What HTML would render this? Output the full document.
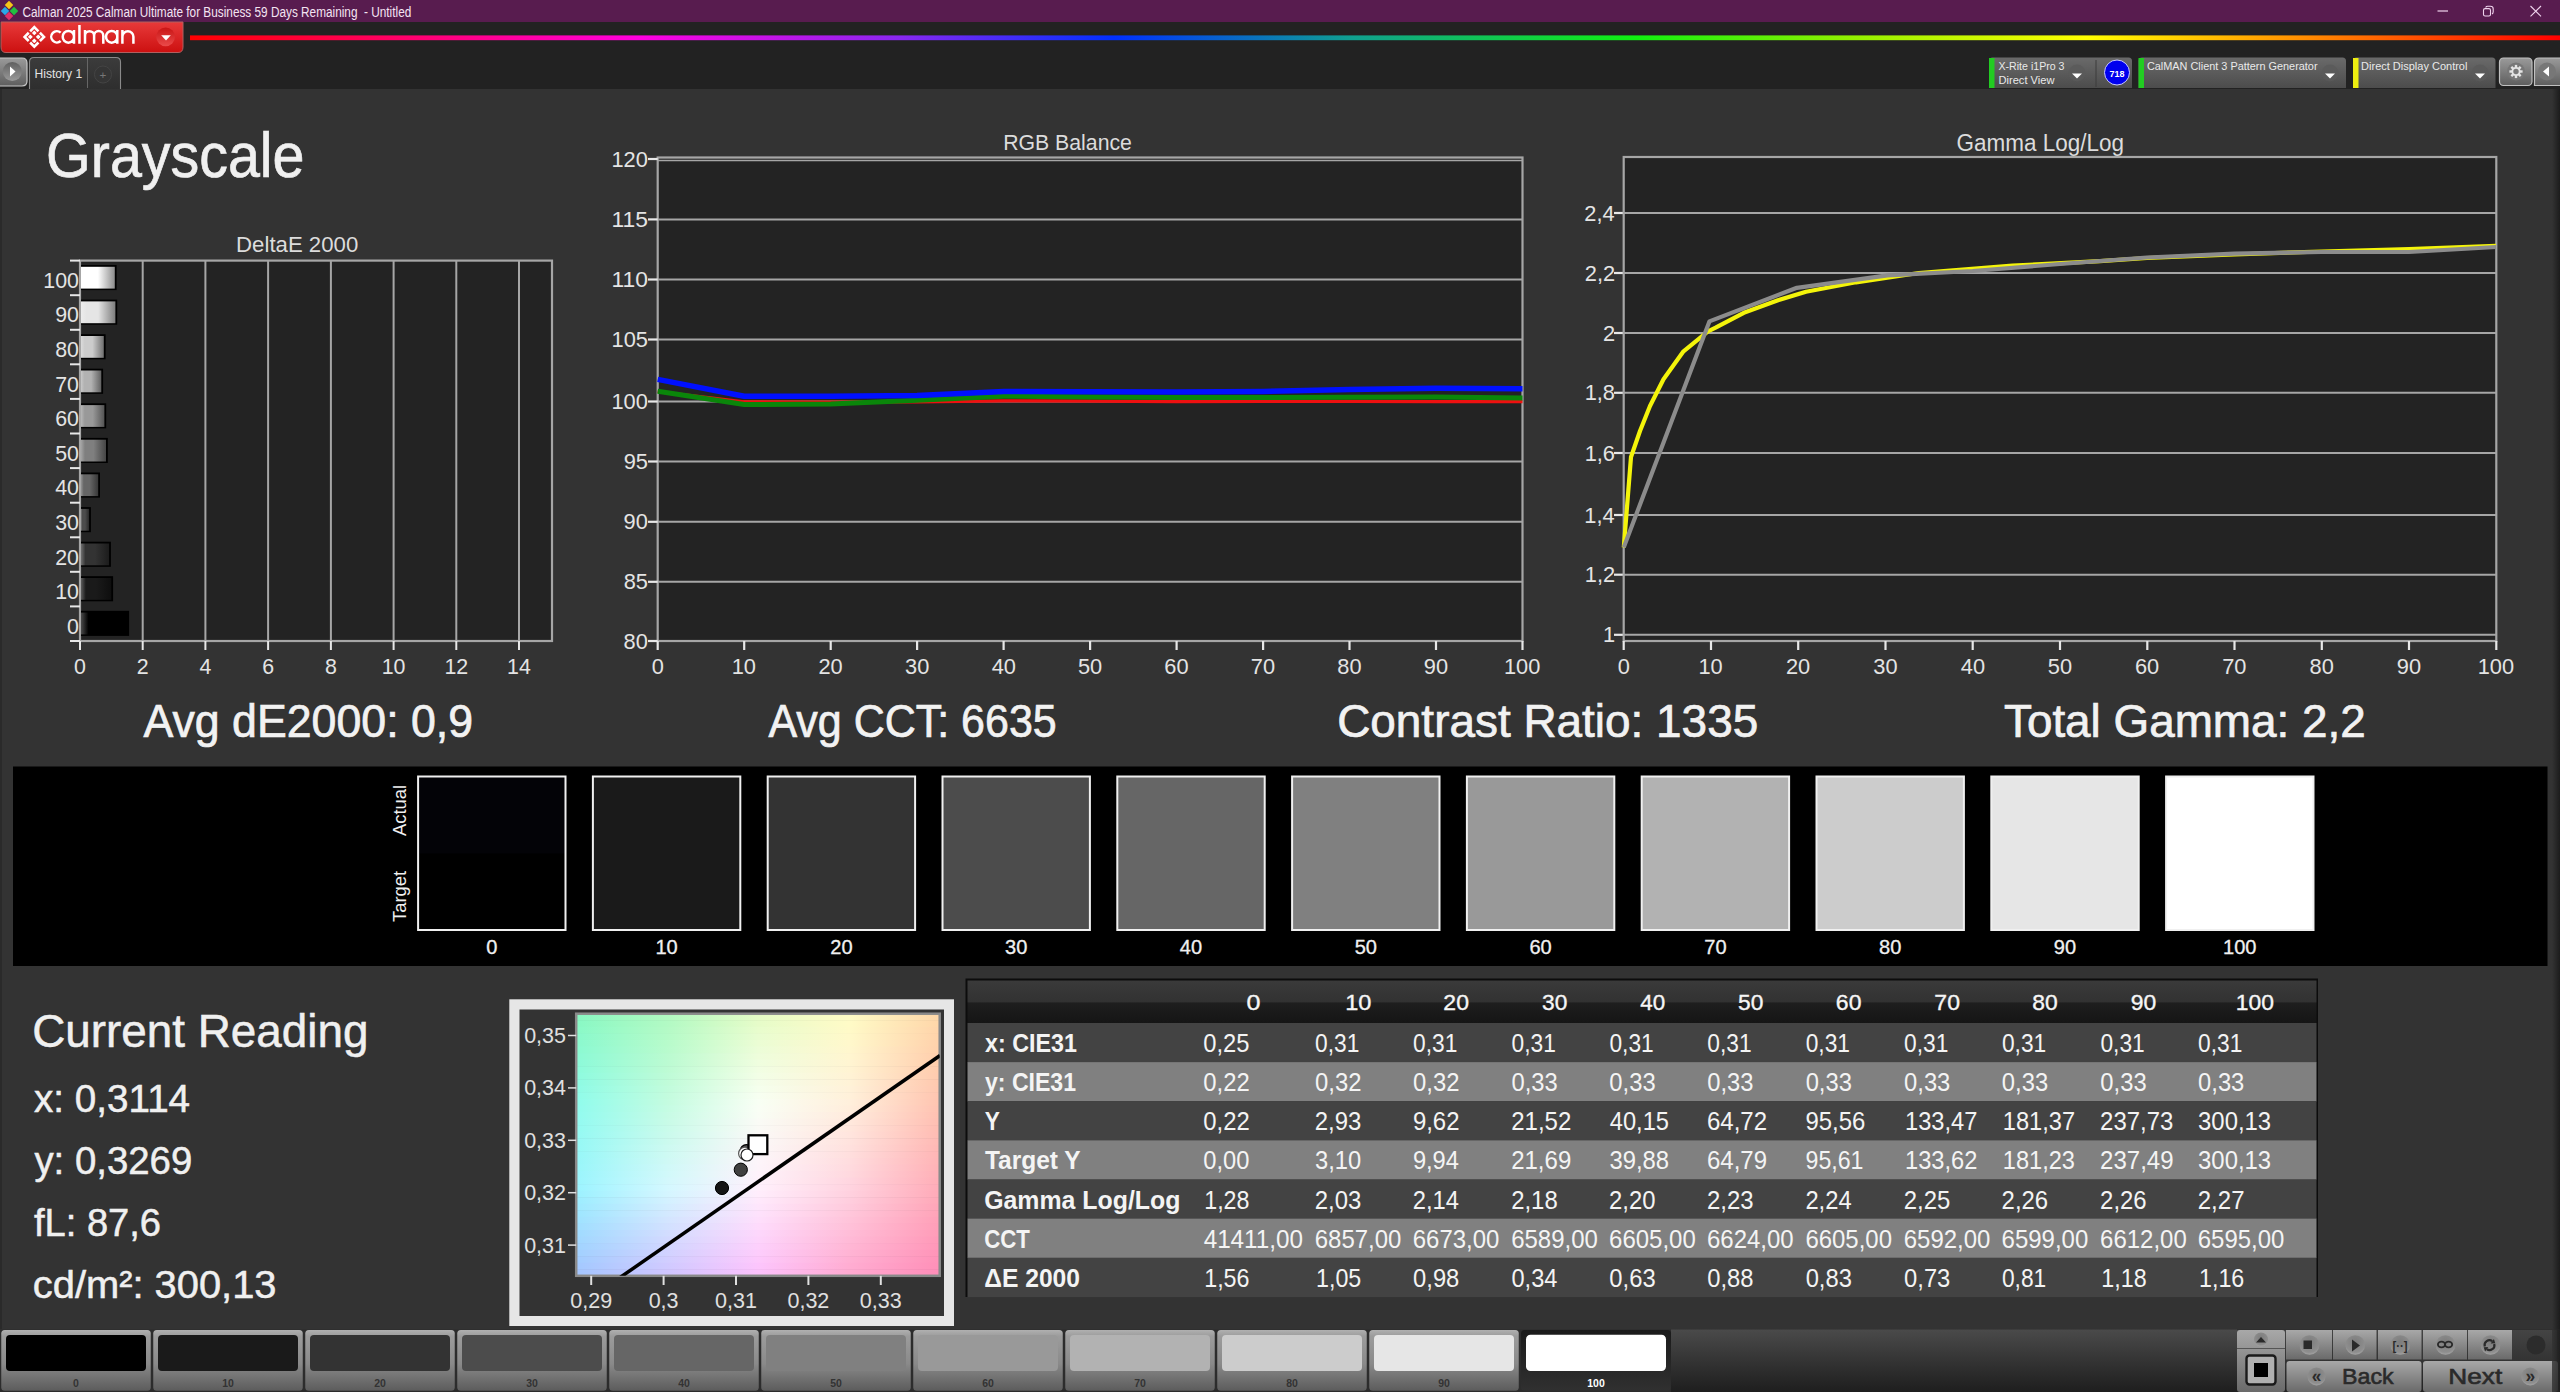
<!DOCTYPE html><html><head><meta charset="utf-8"><title>Calman Grayscale</title>
<style>html,body{margin:0;padding:0;background:#222;overflow:hidden;width:2560px;height:1392px}
svg{display:block;font-family:"Liberation Sans",sans-serif}</style></head><body>
<svg width="2560" height="1392" viewBox="0 0 2560 1392">
<defs>
<linearGradient id="rainbow" x1="0" x2="1" y1="0" y2="0">
<stop offset="0" stop-color="#ff0000"/><stop offset="0.19" stop-color="#ff00e0"/>
<stop offset="0.30" stop-color="#8828f0"/><stop offset="0.39" stop-color="#0030ff"/>
<stop offset="0.49" stop-color="#10a090"/><stop offset="0.61" stop-color="#10f010"/>
<stop offset="0.70" stop-color="#90f000"/><stop offset="0.80" stop-color="#ffff00"/>
<stop offset="0.89" stop-color="#ff9000"/><stop offset="1" stop-color="#ff0000"/>
</linearGradient>
<linearGradient id="redbtn" x1="0" x2="0" y1="0" y2="1">
<stop offset="0" stop-color="#e83a3a"/><stop offset="1" stop-color="#cc1010"/>
</linearGradient>
</defs>

<rect x="0.0" y="0.0" width="2560.0" height="1392.0" fill="#222222" />
<rect x="0.0" y="0.0" width="2560.0" height="22.0" fill="#581c4f" />
<rect x="0.0" y="89.0" width="2560.0" height="1303.0" fill="#333333" />
<defs><linearGradient id="redge" x1="0" x2="1"><stop offset="0" stop-color="#333"/><stop offset="1" stop-color="#1c1c1c"/></linearGradient></defs>
<rect x="2552.0" y="89.0" width="8.0" height="1303.0" fill="url(#redge)" />
<rect x="0.0" y="89.0" width="2.0" height="1240.0" fill="#2a2a2a" />
<text x="22.40" y="16.5" font-size="13.81" font-weight="normal" fill="#f4e4f2" textLength="388.86" lengthAdjust="spacingAndGlyphs" xml:space="preserve">Calman 2025 Calman Ultimate for Business 59 Days Remaining  - Untitled</text>
<rect x="6" y="2" width="6" height="6" fill="#f5c518" transform="rotate(45 9 5)"/>
<rect x="2" y="8" width="6" height="6" fill="#2aa8e8" transform="rotate(45 5 11)"/>
<rect x="11" y="8" width="6" height="6" fill="#22c040" transform="rotate(45 14 11)"/>
<rect x="6" y="13" width="6" height="6" fill="#e0306a" transform="rotate(45 9 16)"/>
<line x1="2437.5" y1="11.0" x2="2448.0" y2="11.0" stroke="#f0d4ee" stroke-width="1.2" />
<rect x="2483.5" y="8.6" width="7" height="7.4" rx="1.6" fill="none" stroke="#f0d4ee" stroke-width="1.1"/>
<path d="M2485.6 7.4 Q2486.2 6.3 2487.8 6.3 H2490.5 Q2493.2 6.3 2493.2 9 V11.8 Q2493.2 13.4 2492 14" fill="none" stroke="#f0d4ee" stroke-width="1.1"/>
<line x1="2530.5" y1="6.0" x2="2541.0" y2="16.3" stroke="#f0d4ee" stroke-width="1.1" />
<line x1="2541.0" y1="6.0" x2="2530.5" y2="16.3" stroke="#f0d4ee" stroke-width="1.1" />
<path d="M1 22 H183 V47 Q183 52.5 178 52.5 H6 Q1 52.5 1 47 Z" fill="url(#redbtn)" stroke="#b06060" stroke-width="1"/>
<g transform="translate(34.3 36.9) rotate(45)"><path d="M-6.86 -1.0 V-6.86 H-1.0 M1.0 -6.86 H6.86 V-1.0 M6.86 1.0 V6.86 H1.0 M-1.0 6.86 H-6.86 V1.0" fill="none" stroke="#fff" stroke-width="2.6" stroke-linejoin="miter" stroke-linecap="butt"/><rect x="-4.5" y="-4.5" width="3.4" height="3.4" rx="0.4" fill="#fff"/><rect x="1.1" y="-4.5" width="3.4" height="3.4" rx="0.4" fill="#fff"/><rect x="-4.5" y="1.1" width="3.4" height="3.4" rx="0.4" fill="#fff"/><rect x="1.1" y="1.1" width="3.4" height="3.4" rx="0.4" fill="#fff"/></g>
<path d="M60.66 32.60 A5.64 5.64 0 1 0 60.66 40.97 M74.00 36.78 A5.64 5.64 0 1 0 62.73 36.78 A5.64 5.64 0 1 0 74.00 36.78 M74.00 29.90 V43.67 M79.45 25.1 V43.67 M85 29.90 V43.67 M85 35.70 A4.55 4.55 0 0 1 94.1 35.70 V43.67 M94.1 35.70 A4.55 4.55 0 0 1 103.3 35.70 V43.67 M117.30 36.78 A5.64 5.64 0 1 0 106.03 36.78 A5.64 5.64 0 1 0 117.30 36.78 M117.30 29.90 V43.67 M122.4 29.90 V43.67 M122.4 36.65 A5.50 5.50 0 0 1 133.4 36.65 V43.67" fill="none" stroke="#ffffff" stroke-width="2.5"/>
<defs><linearGradient id="ddk" x1="0" x2="0" y1="0" y2="1"><stop offset="0" stop-color="#c81414"/><stop offset="1" stop-color="#ea4a4a"/></linearGradient></defs>
<circle cx="165.6" cy="36.8" r="9.4" fill="url(#ddk)"/>
<path d="M161.2 35.2 L170.8 35.2 L166 40.6 Z" fill="#fff"/>
<rect x="190.0" y="35.4" width="2370.0" height="4.8" fill="url(#rainbow)" />
<defs><linearGradient id="btngray" x1="0" x2="0" y1="0" y2="1"><stop offset="0" stop-color="#9a9a9a"/><stop offset="1" stop-color="#5e5e5e"/></linearGradient><linearGradient id="tabg" x1="0" x2="0" y1="0" y2="1"><stop offset="0" stop-color="#3c3c3c"/><stop offset="1" stop-color="#2e2e2e"/></linearGradient><linearGradient id="knob" x1="0" x2="0" y1="0" y2="1"><stop offset="0" stop-color="#606060"/><stop offset="1" stop-color="#9a9a9a"/></linearGradient></defs>
<path d="M-2 58 H22 Q27 58 27 63 V81 Q27 86 22 86 H-2 Z" fill="url(#btngray)" stroke="#c8c8c8" stroke-width="1.2"/>
<circle cx="12.3" cy="71.5" r="9.5" fill="url(#knob)"/>
<path d="M10 66.5 L15.5 71.5 L10 76.5 Z" fill="#fff"/>
<path d="M29.5 89 V62 Q29.5 57.5 34 57.5 H116 Q120.5 57.5 120.5 62 V89" fill="url(#tabg)" stroke="#8a8a8a" stroke-width="1.1"/>
<line x1="87.5" y1="58.0" x2="87.5" y2="88.0" stroke="#666" stroke-width="1" />
<text x="34.51" y="77.8" font-size="12.79" font-weight="normal" fill="#e4e4e4" textLength="47.68" lengthAdjust="spacingAndGlyphs" >History 1</text>
<circle cx="103" cy="74.5" r="8.5" fill="#353535" stroke="#444" stroke-width="1"/>
<text x="103.0" y="79.0" font-size="11.63" text-anchor="middle" font-weight="normal" fill="#777" >+</text>
<defs><linearGradient id="tbg" x1="0" x2="0" y1="0" y2="1"><stop offset="0" stop-color="#6a6a6a"/><stop offset="1" stop-color="#4c4c4c"/></linearGradient></defs>
<path d="M1989 88 V61 Q1989 57.5 1992.5 57.5 H2128.5 Q2132 57.5 2132 61 V88 Z" fill="url(#tbg)"/>
<rect x="1989.0" y="58.0" width="5.5" height="30.0" fill="#22cc22" />
<text x="1998.5" y="70.0" font-size="11.05" text-anchor="start" font-weight="normal" fill="#eaeaea" textLength="66.0" lengthAdjust="spacingAndGlyphs" >X-Rite i1Pro 3</text>
<text x="1998.5" y="84.0" font-size="11.05" text-anchor="start" font-weight="normal" fill="#eaeaea" textLength="56.0" lengthAdjust="spacingAndGlyphs" >Direct View</text>
<circle cx="2077" cy="73" r="8.5" fill="#5a5a5a" opacity="0.8"/>
<path d="M2072 73.5 L2082 73.5 L2077 78.5 Z" fill="#fff"/>
<line x1="2096.0" y1="60.0" x2="2096.0" y2="87.0" stroke="#3c3c3c" stroke-width="1" />
<circle cx="2117" cy="72.5" r="12.5" fill="#0000ee" stroke="#c8c8ff" stroke-width="1"/>
<text x="2117.0" y="76.5" font-size="9.88" text-anchor="middle" font-weight="bold" fill="#fff" textLength="15.0" lengthAdjust="spacingAndGlyphs" >718</text>
<path d="M2138.5 88 V61 Q2138.5 57.5 2142.0 57.5 H2342.5 Q2346 57.5 2346 61 V88 Z" fill="url(#tbg)"/>
<rect x="2138.5" y="58.0" width="5.5" height="30.0" fill="#22cc22" />
<text x="2146.95" y="70.0" font-size="11.05" font-weight="normal" fill="#eaeaea" textLength="170.63" lengthAdjust="spacingAndGlyphs" >CalMAN Client 3 Pattern Generator</text>
<circle cx="2330" cy="73" r="8.5" fill="#5a5a5a" opacity="0.8"/>
<path d="M2325 73.5 L2335 73.5 L2330 78.5 Z" fill="#fff"/>
<path d="M2353 88 V61 Q2353 57.5 2356.5 57.5 H2492.0 Q2495.5 57.5 2495.5 61 V88 Z" fill="url(#tbg)"/>
<rect x="2353.0" y="58.0" width="5.5" height="30.0" fill="#eeee10" />
<text x="2361.10" y="70.0" font-size="11.05" font-weight="normal" fill="#eaeaea" textLength="106.34" lengthAdjust="spacingAndGlyphs" >Direct Display Control</text>
<circle cx="2480" cy="73" r="8.5" fill="#5a5a5a" opacity="0.8"/>
<path d="M2475 73.5 L2485 73.5 L2480 78.5 Z" fill="#fff"/>
<rect x="2499.5" y="58" width="32.5" height="27.5" rx="4" fill="url(#btngray)" stroke="#c0c0c0" stroke-width="1.2"/>
<circle cx="2516" cy="71.5" r="9" fill="#777"/>
<g transform="translate(2516 71.5)" fill="#e4e4e4"><rect x="-1.2" y="-6.6" width="2.4" height="3.2" transform="rotate(0)"/><rect x="-1.2" y="-6.6" width="2.4" height="3.2" transform="rotate(45)"/><rect x="-1.2" y="-6.6" width="2.4" height="3.2" transform="rotate(90)"/><rect x="-1.2" y="-6.6" width="2.4" height="3.2" transform="rotate(135)"/><rect x="-1.2" y="-6.6" width="2.4" height="3.2" transform="rotate(180)"/><rect x="-1.2" y="-6.6" width="2.4" height="3.2" transform="rotate(225)"/><rect x="-1.2" y="-6.6" width="2.4" height="3.2" transform="rotate(270)"/><rect x="-1.2" y="-6.6" width="2.4" height="3.2" transform="rotate(315)"/><circle r="4.6"/><circle r="2.7" fill="#7a7a7a"/></g>
<path d="M2534.5 85.5 V62 Q2534.5 58 2539 58 H2562 V85.5 Z" fill="url(#btngray)" stroke="#c0c0c0" stroke-width="1.2"/>
<circle cx="2547" cy="71.5" r="9" fill="#777"/>
<path d="M2549 66.5 L2543 71.5 L2549 76.5 Z" fill="#fff"/>
<text x="46.11" y="177.0" font-size="62.50" font-weight="normal" fill="#f0f0f0" textLength="258.44" lengthAdjust="spacingAndGlyphs" stroke="#f0f0f0" stroke-width="0.7">Grayscale</text>
<text x="236.08" y="252.2" font-size="21.22" font-weight="normal" fill="#dcdcdc" textLength="122.19" lengthAdjust="spacingAndGlyphs" >DeltaE 2000</text>
<rect x="80.0" y="260.6" width="472.0" height="380.4" fill="#232323" />
<line x1="142.7" y1="260.6" x2="142.7" y2="641.0" stroke="#a6a6a6" stroke-width="2" />
<line x1="205.4" y1="260.6" x2="205.4" y2="641.0" stroke="#a6a6a6" stroke-width="2" />
<line x1="268.1" y1="260.6" x2="268.1" y2="641.0" stroke="#a6a6a6" stroke-width="2" />
<line x1="330.9" y1="260.6" x2="330.9" y2="641.0" stroke="#a6a6a6" stroke-width="2" />
<line x1="393.6" y1="260.6" x2="393.6" y2="641.0" stroke="#a6a6a6" stroke-width="2" />
<line x1="456.3" y1="260.6" x2="456.3" y2="641.0" stroke="#a6a6a6" stroke-width="2" />
<line x1="519.0" y1="260.6" x2="519.0" y2="641.0" stroke="#a6a6a6" stroke-width="2" />
<rect x="80" y="260.6" width="472" height="380.4" fill="none" stroke="#a6a6a6" stroke-width="2.2"/>
<line x1="80.0" y1="641.0" x2="80.0" y2="650.0" stroke="#e8e8e8" stroke-width="2" />
<text x="80.0" y="673.6" font-size="21.37" text-anchor="middle" font-weight="normal" fill="#e4e4e4" >0</text>
<line x1="142.7" y1="641.0" x2="142.7" y2="650.0" stroke="#e8e8e8" stroke-width="2" />
<text x="142.7" y="673.6" font-size="21.37" text-anchor="middle" font-weight="normal" fill="#e4e4e4" >2</text>
<line x1="205.4" y1="641.0" x2="205.4" y2="650.0" stroke="#e8e8e8" stroke-width="2" />
<text x="205.4" y="673.6" font-size="21.37" text-anchor="middle" font-weight="normal" fill="#e4e4e4" >4</text>
<line x1="268.1" y1="641.0" x2="268.1" y2="650.0" stroke="#e8e8e8" stroke-width="2" />
<text x="268.1" y="673.6" font-size="21.37" text-anchor="middle" font-weight="normal" fill="#e4e4e4" >6</text>
<line x1="330.9" y1="641.0" x2="330.9" y2="650.0" stroke="#e8e8e8" stroke-width="2" />
<text x="330.9" y="673.6" font-size="21.37" text-anchor="middle" font-weight="normal" fill="#e4e4e4" >8</text>
<line x1="393.6" y1="641.0" x2="393.6" y2="650.0" stroke="#e8e8e8" stroke-width="2" />
<text x="393.6" y="673.6" font-size="21.37" text-anchor="middle" font-weight="normal" fill="#e4e4e4" >10</text>
<line x1="456.3" y1="641.0" x2="456.3" y2="650.0" stroke="#e8e8e8" stroke-width="2" />
<text x="456.3" y="673.6" font-size="21.37" text-anchor="middle" font-weight="normal" fill="#e4e4e4" >12</text>
<line x1="519.0" y1="641.0" x2="519.0" y2="650.0" stroke="#e8e8e8" stroke-width="2" />
<text x="519.0" y="673.6" font-size="21.37" text-anchor="middle" font-weight="normal" fill="#e4e4e4" >14</text>
<line x1="70.0" y1="260.6" x2="80.0" y2="260.6" stroke="#e8e8e8" stroke-width="2" />
<line x1="70.0" y1="295.2" x2="80.0" y2="295.2" stroke="#e8e8e8" stroke-width="2" />
<line x1="70.0" y1="329.8" x2="80.0" y2="329.8" stroke="#e8e8e8" stroke-width="2" />
<line x1="70.0" y1="364.3" x2="80.0" y2="364.3" stroke="#e8e8e8" stroke-width="2" />
<line x1="70.0" y1="398.9" x2="80.0" y2="398.9" stroke="#e8e8e8" stroke-width="2" />
<line x1="70.0" y1="433.5" x2="80.0" y2="433.5" stroke="#e8e8e8" stroke-width="2" />
<line x1="70.0" y1="468.1" x2="80.0" y2="468.1" stroke="#e8e8e8" stroke-width="2" />
<line x1="70.0" y1="502.7" x2="80.0" y2="502.7" stroke="#e8e8e8" stroke-width="2" />
<line x1="70.0" y1="537.3" x2="80.0" y2="537.3" stroke="#e8e8e8" stroke-width="2" />
<line x1="70.0" y1="571.8" x2="80.0" y2="571.8" stroke="#e8e8e8" stroke-width="2" />
<line x1="70.0" y1="606.4" x2="80.0" y2="606.4" stroke="#e8e8e8" stroke-width="2" />
<line x1="70.0" y1="641.0" x2="80.0" y2="641.0" stroke="#e8e8e8" stroke-width="2" />
<rect x="81.0" y="265.0" width="35.6" height="25.1" fill="#000" />
<rect x="81.0" y="266.8" width="33.8" height="21.8" fill="url(#bar100)" />
<text x="43.29" y="287.8" font-size="21.37" font-weight="normal" fill="#e4e4e4" textLength="35.65" lengthAdjust="spacingAndGlyphs" >100</text>
<rect x="81.0" y="299.6" width="36.2" height="25.1" fill="#000" />
<rect x="81.0" y="301.4" width="34.4" height="21.8" fill="url(#bar90)" />
<text x="55.17" y="322.4" font-size="21.37" font-weight="normal" fill="#e4e4e4" textLength="23.77" lengthAdjust="spacingAndGlyphs" >90</text>
<rect x="81.0" y="334.2" width="24.6" height="25.1" fill="#000" />
<rect x="81.0" y="336.0" width="22.8" height="21.8" fill="url(#bar80)" />
<text x="55.17" y="357.0" font-size="21.37" font-weight="normal" fill="#e4e4e4" textLength="23.77" lengthAdjust="spacingAndGlyphs" >80</text>
<rect x="81.0" y="368.7" width="22.1" height="25.1" fill="#000" />
<rect x="81.0" y="370.5" width="20.3" height="21.8" fill="url(#bar70)" />
<text x="55.17" y="391.5" font-size="21.37" font-weight="normal" fill="#e4e4e4" textLength="23.77" lengthAdjust="spacingAndGlyphs" >70</text>
<rect x="81.0" y="403.3" width="25.2" height="25.1" fill="#000" />
<rect x="81.0" y="405.1" width="23.4" height="21.8" fill="url(#bar60)" />
<text x="55.17" y="426.1" font-size="21.37" font-weight="normal" fill="#e4e4e4" textLength="23.77" lengthAdjust="spacingAndGlyphs" >60</text>
<rect x="81.0" y="437.9" width="26.8" height="25.1" fill="#000" />
<rect x="81.0" y="439.7" width="25.0" height="21.8" fill="url(#bar50)" />
<text x="55.17" y="460.7" font-size="21.37" font-weight="normal" fill="#e4e4e4" textLength="23.77" lengthAdjust="spacingAndGlyphs" >50</text>
<rect x="81.0" y="472.5" width="19.0" height="25.1" fill="#000" />
<rect x="81.0" y="474.3" width="17.2" height="21.8" fill="url(#bar40)" />
<text x="55.17" y="495.3" font-size="21.37" font-weight="normal" fill="#e4e4e4" textLength="23.77" lengthAdjust="spacingAndGlyphs" >40</text>
<rect x="81.0" y="507.1" width="9.9" height="25.1" fill="#000" />
<rect x="81.0" y="508.9" width="8.1" height="21.8" fill="url(#bar30)" />
<text x="55.17" y="529.9" font-size="21.37" font-weight="normal" fill="#e4e4e4" textLength="23.77" lengthAdjust="spacingAndGlyphs" >30</text>
<rect x="81.0" y="541.7" width="29.9" height="25.1" fill="#000" />
<rect x="81.0" y="543.5" width="28.1" height="21.8" fill="url(#bar20)" />
<text x="55.17" y="564.5" font-size="21.37" font-weight="normal" fill="#e4e4e4" textLength="23.77" lengthAdjust="spacingAndGlyphs" >20</text>
<rect x="81.0" y="576.2" width="32.1" height="25.1" fill="#000" />
<rect x="81.0" y="578.0" width="30.3" height="21.8" fill="url(#bar10)" />
<text x="55.17" y="599.0" font-size="21.37" font-weight="normal" fill="#e4e4e4" textLength="23.77" lengthAdjust="spacingAndGlyphs" >10</text>
<rect x="81.0" y="610.8" width="48.1" height="25.1" fill="#000" />
<rect x="81.0" y="612.6" width="46.3" height="21.8" fill="url(#bar0)" />
<text x="67.05" y="633.6" font-size="21.37" font-weight="normal" fill="#e4e4e4" textLength="11.88" lengthAdjust="spacingAndGlyphs" >0</text>
<defs><linearGradient id="bar100" x1="0" x2="1" y1="0" y2="0"><stop offset="0" stop-color="#ffffff"/><stop offset="0.16" stop-color="#ffffff"/><stop offset="0.5" stop-color="#ffffff"/><stop offset="1" stop-color="#8c8c8c"/></linearGradient><linearGradient id="bar90" x1="0" x2="1" y1="0" y2="0"><stop offset="0" stop-color="#ececec"/><stop offset="0.16" stop-color="#e5e5e5"/><stop offset="0.5" stop-color="#e5e5e5"/><stop offset="1" stop-color="#7d7d7d"/></linearGradient><linearGradient id="bar80" x1="0" x2="1" y1="0" y2="0"><stop offset="0" stop-color="#dbdbdb"/><stop offset="0.16" stop-color="#cccccc"/><stop offset="0.5" stop-color="#cccccc"/><stop offset="1" stop-color="#707070"/></linearGradient><linearGradient id="bar70" x1="0" x2="1" y1="0" y2="0"><stop offset="0" stop-color="#c8c8c8"/><stop offset="0.16" stop-color="#b2b2b2"/><stop offset="0.5" stop-color="#b2b2b2"/><stop offset="1" stop-color="#616161"/></linearGradient><linearGradient id="bar60" x1="0" x2="1" y1="0" y2="0"><stop offset="0" stop-color="#b7b7b7"/><stop offset="0.16" stop-color="#999999"/><stop offset="0.5" stop-color="#999999"/><stop offset="1" stop-color="#545454"/></linearGradient><linearGradient id="bar50" x1="0" x2="1" y1="0" y2="0"><stop offset="0" stop-color="#a4a4a4"/><stop offset="0.16" stop-color="#7f7f7f"/><stop offset="0.5" stop-color="#7f7f7f"/><stop offset="1" stop-color="#454545"/></linearGradient><linearGradient id="bar40" x1="0" x2="1" y1="0" y2="0"><stop offset="0" stop-color="#939393"/><stop offset="0.16" stop-color="#666666"/><stop offset="0.5" stop-color="#666666"/><stop offset="1" stop-color="#383838"/></linearGradient><linearGradient id="bar30" x1="0" x2="1" y1="0" y2="0"><stop offset="0" stop-color="#808080"/><stop offset="0.16" stop-color="#4c4c4c"/><stop offset="0.5" stop-color="#4c4c4c"/><stop offset="1" stop-color="#292929"/></linearGradient><linearGradient id="bar20" x1="0" x2="1" y1="0" y2="0"><stop offset="0" stop-color="#6f6f6f"/><stop offset="0.16" stop-color="#333333"/><stop offset="0.5" stop-color="#333333"/><stop offset="1" stop-color="#1c1c1c"/></linearGradient><linearGradient id="bar10" x1="0" x2="1" y1="0" y2="0"><stop offset="0" stop-color="#5d5d5d"/><stop offset="0.16" stop-color="#1a1a1a"/><stop offset="0.5" stop-color="#1a1a1a"/><stop offset="1" stop-color="#0e0e0e"/></linearGradient><linearGradient id="bar0" x1="0" x2="1" y1="0" y2="0"><stop offset="0" stop-color="#4b4b4b"/><stop offset="0.16" stop-color="#000000"/><stop offset="0.5" stop-color="#000000"/><stop offset="1" stop-color="#000000"/></linearGradient></defs>
<text x="1003.16" y="149.5" font-size="22.53" font-weight="normal" fill="#dcdcdc" textLength="128.79" lengthAdjust="spacingAndGlyphs" >RGB Balance</text>
<rect x="657.7" y="159.0" width="864.8" height="482.0" fill="#232323" />
<line x1="657.7" y1="581.8" x2="1522.5" y2="581.8" stroke="#a6a6a6" stroke-width="2" />
<line x1="657.7" y1="521.8" x2="1522.5" y2="521.8" stroke="#a6a6a6" stroke-width="2" />
<line x1="657.7" y1="461.5" x2="1522.5" y2="461.5" stroke="#a6a6a6" stroke-width="2" />
<line x1="657.7" y1="401.5" x2="1522.5" y2="401.5" stroke="#a6a6a6" stroke-width="2" />
<line x1="657.7" y1="339.5" x2="1522.5" y2="339.5" stroke="#a6a6a6" stroke-width="2" />
<line x1="657.7" y1="279.5" x2="1522.5" y2="279.5" stroke="#a6a6a6" stroke-width="2" />
<line x1="657.7" y1="219.4" x2="1522.5" y2="219.4" stroke="#a6a6a6" stroke-width="2" />
<rect x="657.7" y="157.5" width="864.8" height="483.5" fill="none" stroke="#a6a6a6" stroke-width="2.2"/>
<line x1="657.7" y1="160.5" x2="1522.5" y2="160.5" stroke="#a6a6a6" stroke-width="1.6" />
<line x1="648.0" y1="641.0" x2="657.7" y2="641.0" stroke="#e8e8e8" stroke-width="2.2" />
<text x="623.60" y="648.6" font-size="21.80" font-weight="normal" fill="#e4e4e4" textLength="24.25" lengthAdjust="spacingAndGlyphs" >80</text>
<line x1="648.0" y1="581.8" x2="657.7" y2="581.8" stroke="#e8e8e8" stroke-width="2.2" />
<text x="623.66" y="589.4" font-size="21.80" font-weight="normal" fill="#e4e4e4" textLength="24.25" lengthAdjust="spacingAndGlyphs" >85</text>
<line x1="648.0" y1="521.8" x2="657.7" y2="521.8" stroke="#e8e8e8" stroke-width="2.2" />
<text x="623.60" y="529.4" font-size="21.80" font-weight="normal" fill="#e4e4e4" textLength="24.25" lengthAdjust="spacingAndGlyphs" >90</text>
<line x1="648.0" y1="461.5" x2="657.7" y2="461.5" stroke="#e8e8e8" stroke-width="2.2" />
<text x="623.66" y="469.1" font-size="21.80" font-weight="normal" fill="#e4e4e4" textLength="24.25" lengthAdjust="spacingAndGlyphs" >95</text>
<line x1="648.0" y1="401.5" x2="657.7" y2="401.5" stroke="#e8e8e8" stroke-width="2.2" />
<text x="611.48" y="409.1" font-size="21.80" font-weight="normal" fill="#e4e4e4" textLength="36.38" lengthAdjust="spacingAndGlyphs" >100</text>
<line x1="648.0" y1="339.5" x2="657.7" y2="339.5" stroke="#e8e8e8" stroke-width="2.2" />
<text x="611.54" y="347.1" font-size="21.80" font-weight="normal" fill="#e4e4e4" textLength="36.38" lengthAdjust="spacingAndGlyphs" >105</text>
<line x1="648.0" y1="279.5" x2="657.7" y2="279.5" stroke="#e8e8e8" stroke-width="2.2" />
<text x="611.48" y="287.1" font-size="21.80" font-weight="normal" fill="#e4e4e4" textLength="36.38" lengthAdjust="spacingAndGlyphs" >110</text>
<line x1="648.0" y1="219.4" x2="657.7" y2="219.4" stroke="#e8e8e8" stroke-width="2.2" />
<text x="611.54" y="227.0" font-size="21.80" font-weight="normal" fill="#e4e4e4" textLength="36.38" lengthAdjust="spacingAndGlyphs" >115</text>
<line x1="648.0" y1="159.0" x2="657.7" y2="159.0" stroke="#e8e8e8" stroke-width="2.2" />
<text x="611.48" y="166.6" font-size="21.80" font-weight="normal" fill="#e4e4e4" textLength="36.38" lengthAdjust="spacingAndGlyphs" >120</text>
<line x1="657.7" y1="641.0" x2="657.7" y2="650.0" stroke="#e8e8e8" stroke-width="2.2" />
<text x="651.64" y="674.0" font-size="21.80" font-weight="normal" fill="#e4e4e4" textLength="12.13" lengthAdjust="spacingAndGlyphs" >0</text>
<line x1="744.2" y1="641.0" x2="744.2" y2="650.0" stroke="#e8e8e8" stroke-width="2.2" />
<text x="731.65" y="674.0" font-size="21.80" font-weight="normal" fill="#e4e4e4" textLength="24.25" lengthAdjust="spacingAndGlyphs" >10</text>
<line x1="830.7" y1="641.0" x2="830.7" y2="650.0" stroke="#e8e8e8" stroke-width="2.2" />
<text x="818.41" y="674.0" font-size="21.80" font-weight="normal" fill="#e4e4e4" textLength="24.25" lengthAdjust="spacingAndGlyphs" >20</text>
<line x1="917.1" y1="641.0" x2="917.1" y2="650.0" stroke="#e8e8e8" stroke-width="2.2" />
<text x="905.03" y="674.0" font-size="21.80" font-weight="normal" fill="#e4e4e4" textLength="24.25" lengthAdjust="spacingAndGlyphs" >30</text>
<line x1="1003.6" y1="641.0" x2="1003.6" y2="650.0" stroke="#e8e8e8" stroke-width="2.2" />
<text x="991.67" y="674.0" font-size="21.80" font-weight="normal" fill="#e4e4e4" textLength="24.25" lengthAdjust="spacingAndGlyphs" >40</text>
<line x1="1090.1" y1="641.0" x2="1090.1" y2="650.0" stroke="#e8e8e8" stroke-width="2.2" />
<text x="1077.96" y="674.0" font-size="21.80" font-weight="normal" fill="#e4e4e4" textLength="24.25" lengthAdjust="spacingAndGlyphs" >50</text>
<line x1="1176.6" y1="641.0" x2="1176.6" y2="650.0" stroke="#e8e8e8" stroke-width="2.2" />
<text x="1164.33" y="674.0" font-size="21.80" font-weight="normal" fill="#e4e4e4" textLength="24.25" lengthAdjust="spacingAndGlyphs" >60</text>
<line x1="1263.1" y1="641.0" x2="1263.1" y2="650.0" stroke="#e8e8e8" stroke-width="2.2" />
<text x="1250.80" y="674.0" font-size="21.80" font-weight="normal" fill="#e4e4e4" textLength="24.25" lengthAdjust="spacingAndGlyphs" >70</text>
<line x1="1349.5" y1="641.0" x2="1349.5" y2="650.0" stroke="#e8e8e8" stroke-width="2.2" />
<text x="1337.37" y="674.0" font-size="21.80" font-weight="normal" fill="#e4e4e4" textLength="24.25" lengthAdjust="spacingAndGlyphs" >80</text>
<line x1="1436.0" y1="641.0" x2="1436.0" y2="650.0" stroke="#e8e8e8" stroke-width="2.2" />
<text x="1423.81" y="674.0" font-size="21.80" font-weight="normal" fill="#e4e4e4" textLength="24.25" lengthAdjust="spacingAndGlyphs" >90</text>
<line x1="1522.5" y1="641.0" x2="1522.5" y2="650.0" stroke="#e8e8e8" stroke-width="2.2" />
<text x="1503.91" y="674.0" font-size="21.80" font-weight="normal" fill="#e4e4e4" textLength="36.38" lengthAdjust="spacingAndGlyphs" >100</text>
<polyline points="657.7,391.5 744.2,401.8 830.7,402.2 917.1,401.8 1003.6,400.8 1090.1,401.2 1176.6,401.6 1263.1,401.4 1349.5,401.4 1436.0,401.6 1522.5,401.6" fill="none" stroke="#ee1010" stroke-width="3.2" stroke-linejoin="round"/>
<polyline points="657.7,391.2 744.2,404.5 830.7,404.0 917.1,400.3 1003.6,396.2 1090.1,397.0 1176.6,397.6 1263.1,397.5 1349.5,397.3 1436.0,397.0 1522.5,398.0" fill="none" stroke="#0a860a" stroke-width="5" stroke-linejoin="round"/>
<polyline points="657.7,379.4 744.2,396.3 830.7,396.3 917.1,395.5 1003.6,391.4 1090.1,391.8 1176.6,392.1 1263.1,391.5 1349.5,389.4 1436.0,388.3 1522.5,388.7" fill="none" stroke="#0010ff" stroke-width="5.5" stroke-linejoin="round"/>
<text x="1956.57" y="150.5" font-size="23.98" font-weight="normal" fill="#dcdcdc" textLength="167.38" lengthAdjust="spacingAndGlyphs" >Gamma Log/Log</text>
<rect x="1623.7" y="157.0" width="872.6" height="484.0" fill="#232323" />
<line x1="1623.7" y1="213.0" x2="2496.3" y2="213.0" stroke="#a6a6a6" stroke-width="2" />
<line x1="1614.0" y1="213.0" x2="1623.7" y2="213.0" stroke="#e8e8e8" stroke-width="2.2" />
<text x="1584.33" y="220.6" font-size="21.80" font-weight="normal" fill="#e4e4e4" textLength="30.31" lengthAdjust="spacingAndGlyphs" >2,4</text>
<line x1="1623.7" y1="273.0" x2="2496.3" y2="273.0" stroke="#a6a6a6" stroke-width="2" />
<line x1="1614.0" y1="273.0" x2="1623.7" y2="273.0" stroke="#e8e8e8" stroke-width="2.2" />
<text x="1584.79" y="280.6" font-size="21.80" font-weight="normal" fill="#e4e4e4" textLength="30.31" lengthAdjust="spacingAndGlyphs" >2,2</text>
<line x1="1623.7" y1="333.0" x2="2496.3" y2="333.0" stroke="#a6a6a6" stroke-width="2" />
<line x1="1614.0" y1="333.0" x2="1623.7" y2="333.0" stroke="#e8e8e8" stroke-width="2.2" />
<text x="1602.97" y="340.6" font-size="21.80" font-weight="normal" fill="#e4e4e4" textLength="12.13" lengthAdjust="spacingAndGlyphs" >2</text>
<line x1="1623.7" y1="392.8" x2="2496.3" y2="392.8" stroke="#a6a6a6" stroke-width="2" />
<line x1="1614.0" y1="392.8" x2="1623.7" y2="392.8" stroke="#e8e8e8" stroke-width="2.2" />
<text x="1584.64" y="400.4" font-size="21.80" font-weight="normal" fill="#e4e4e4" textLength="30.31" lengthAdjust="spacingAndGlyphs" >1,8</text>
<line x1="1623.7" y1="453.0" x2="2496.3" y2="453.0" stroke="#a6a6a6" stroke-width="2" />
<line x1="1614.0" y1="453.0" x2="1623.7" y2="453.0" stroke="#e8e8e8" stroke-width="2.2" />
<text x="1584.65" y="460.6" font-size="21.80" font-weight="normal" fill="#e4e4e4" textLength="30.31" lengthAdjust="spacingAndGlyphs" >1,6</text>
<line x1="1623.7" y1="515.0" x2="2496.3" y2="515.0" stroke="#a6a6a6" stroke-width="2" />
<line x1="1614.0" y1="515.0" x2="1623.7" y2="515.0" stroke="#e8e8e8" stroke-width="2.2" />
<text x="1584.33" y="522.6" font-size="21.80" font-weight="normal" fill="#e4e4e4" textLength="30.31" lengthAdjust="spacingAndGlyphs" >1,4</text>
<line x1="1623.7" y1="574.7" x2="2496.3" y2="574.7" stroke="#a6a6a6" stroke-width="2" />
<line x1="1614.0" y1="574.7" x2="1623.7" y2="574.7" stroke="#e8e8e8" stroke-width="2.2" />
<text x="1584.79" y="582.3" font-size="21.80" font-weight="normal" fill="#e4e4e4" textLength="30.31" lengthAdjust="spacingAndGlyphs" >1,2</text>
<line x1="1623.7" y1="634.8" x2="2496.3" y2="634.8" stroke="#a6a6a6" stroke-width="2" />
<line x1="1614.0" y1="634.8" x2="1623.7" y2="634.8" stroke="#e8e8e8" stroke-width="2.2" />
<text x="1602.94" y="642.4" font-size="21.80" font-weight="normal" fill="#e4e4e4" textLength="12.13" lengthAdjust="spacingAndGlyphs" >1</text>
<rect x="1623.7" y="157" width="872.6000000000001" height="484" fill="none" stroke="#a6a6a6" stroke-width="2.2"/>
<line x1="1623.7" y1="641.0" x2="1623.7" y2="650.0" stroke="#e8e8e8" stroke-width="2.2" />
<text x="1617.64" y="674.0" font-size="21.80" font-weight="normal" fill="#e4e4e4" textLength="12.13" lengthAdjust="spacingAndGlyphs" >0</text>
<line x1="1711.0" y1="641.0" x2="1711.0" y2="650.0" stroke="#e8e8e8" stroke-width="2.2" />
<text x="1698.43" y="674.0" font-size="21.80" font-weight="normal" fill="#e4e4e4" textLength="24.25" lengthAdjust="spacingAndGlyphs" >10</text>
<line x1="1798.2" y1="641.0" x2="1798.2" y2="650.0" stroke="#e8e8e8" stroke-width="2.2" />
<text x="1785.97" y="674.0" font-size="21.80" font-weight="normal" fill="#e4e4e4" textLength="24.25" lengthAdjust="spacingAndGlyphs" >20</text>
<line x1="1885.5" y1="641.0" x2="1885.5" y2="650.0" stroke="#e8e8e8" stroke-width="2.2" />
<text x="1873.37" y="674.0" font-size="21.80" font-weight="normal" fill="#e4e4e4" textLength="24.25" lengthAdjust="spacingAndGlyphs" >30</text>
<line x1="1972.7" y1="641.0" x2="1972.7" y2="650.0" stroke="#e8e8e8" stroke-width="2.2" />
<text x="1960.79" y="674.0" font-size="21.80" font-weight="normal" fill="#e4e4e4" textLength="24.25" lengthAdjust="spacingAndGlyphs" >40</text>
<line x1="2060.0" y1="641.0" x2="2060.0" y2="650.0" stroke="#e8e8e8" stroke-width="2.2" />
<text x="2047.86" y="674.0" font-size="21.80" font-weight="normal" fill="#e4e4e4" textLength="24.25" lengthAdjust="spacingAndGlyphs" >50</text>
<line x1="2147.3" y1="641.0" x2="2147.3" y2="650.0" stroke="#e8e8e8" stroke-width="2.2" />
<text x="2135.01" y="674.0" font-size="21.80" font-weight="normal" fill="#e4e4e4" textLength="24.25" lengthAdjust="spacingAndGlyphs" >60</text>
<line x1="2234.5" y1="641.0" x2="2234.5" y2="650.0" stroke="#e8e8e8" stroke-width="2.2" />
<text x="2222.26" y="674.0" font-size="21.80" font-weight="normal" fill="#e4e4e4" textLength="24.25" lengthAdjust="spacingAndGlyphs" >70</text>
<line x1="2321.8" y1="641.0" x2="2321.8" y2="650.0" stroke="#e8e8e8" stroke-width="2.2" />
<text x="2309.61" y="674.0" font-size="21.80" font-weight="normal" fill="#e4e4e4" textLength="24.25" lengthAdjust="spacingAndGlyphs" >80</text>
<line x1="2409.0" y1="641.0" x2="2409.0" y2="650.0" stroke="#e8e8e8" stroke-width="2.2" />
<text x="2396.83" y="674.0" font-size="21.80" font-weight="normal" fill="#e4e4e4" textLength="24.25" lengthAdjust="spacingAndGlyphs" >90</text>
<line x1="2496.3" y1="641.0" x2="2496.3" y2="650.0" stroke="#e8e8e8" stroke-width="2.2" />
<text x="2477.71" y="674.0" font-size="21.80" font-weight="normal" fill="#e4e4e4" textLength="36.38" lengthAdjust="spacingAndGlyphs" >100</text>
<polyline points="1623.8,547.3 1631.0,457.0 1640.0,431.0 1650.0,406.0 1663.5,379.2 1683.5,351.3 1708.0,331.3 1715.6,327.7 1743.8,312.8 1778.0,300.3 1806.0,291.7 1856.0,282.3 1918.8,273.0 2012.5,265.6 2100.0,261.2 2147.0,258.0 2234.5,254.5 2321.5,251.5 2409.0,249.0 2496.0,245.8" fill="none" stroke="#f4f40a" stroke-width="4.2" stroke-linejoin="round"/>
<polyline points="1623.8,547.3 1709.4,321.4 1796.9,287.8 1887.5,275.3 1972.7,271.0 2060.0,264.0 2147.0,257.5 2234.5,253.6 2321.5,252.0 2409.0,252.0 2496.0,247.0" fill="none" stroke="#8c8c8c" stroke-width="4.2" stroke-linejoin="round"/>
<text x="143.41" y="737.3" font-size="45.78" font-weight="normal" fill="#f2f2f2" textLength="329.70" lengthAdjust="spacingAndGlyphs" stroke="#f2f2f2" stroke-width="0.7">Avg dE2000: 0,9</text>
<text x="768.42" y="737.3" font-size="45.78" font-weight="normal" fill="#f2f2f2" textLength="288.35" lengthAdjust="spacingAndGlyphs" stroke="#f2f2f2" stroke-width="0.7">Avg CCT: 6635</text>
<text x="1337.17" y="737.3" font-size="45.78" font-weight="normal" fill="#f2f2f2" textLength="421.06" lengthAdjust="spacingAndGlyphs" stroke="#f2f2f2" stroke-width="0.7">Contrast Ratio: 1335</text>
<text x="2003.98" y="737.3" font-size="45.78" font-weight="normal" fill="#f2f2f2" textLength="361.79" lengthAdjust="spacingAndGlyphs" stroke="#f2f2f2" stroke-width="0.7">Total Gamma: 2,2</text>
<rect x="13.0" y="766.5" width="2534.5" height="199.5" fill="#000000" />
<text transform="translate(405.5 836) rotate(-90)" font-size="19" fill="#f0f0f0" textLength="51" lengthAdjust="spacingAndGlyphs">Actual</text>
<text transform="translate(405.5 922) rotate(-90)" font-size="19" fill="#f0f0f0" textLength="51" lengthAdjust="spacingAndGlyphs">Target</text>
<rect x="418.1" y="776.5" width="147.4" height="153.5" fill="#000000" />
<rect x="418.1" y="776.5" width="147.4" height="77.0" fill="#030307" />
<rect x="418.1" y="776.5" width="147.4" height="153.5" fill="none" stroke="#f0f0f0" stroke-width="2"/>
<text x="491.8" y="954.0" font-size="20.06" text-anchor="middle" font-weight="normal" fill="#f0f0f0" stroke="#f0f0f0" stroke-width="0.3">0</text>
<rect x="592.9" y="776.5" width="147.4" height="153.5" fill="#1a1a1a" />
<rect x="592.9" y="776.5" width="147.4" height="153.5" fill="none" stroke="#f0f0f0" stroke-width="2"/>
<text x="666.6" y="954.0" font-size="20.06" text-anchor="middle" font-weight="normal" fill="#f0f0f0" stroke="#f0f0f0" stroke-width="0.3">10</text>
<rect x="767.7" y="776.5" width="147.4" height="153.5" fill="#333333" />
<rect x="767.7" y="776.5" width="147.4" height="153.5" fill="none" stroke="#f0f0f0" stroke-width="2"/>
<text x="841.4" y="954.0" font-size="20.06" text-anchor="middle" font-weight="normal" fill="#f0f0f0" stroke="#f0f0f0" stroke-width="0.3">20</text>
<rect x="942.5" y="776.5" width="147.4" height="153.5" fill="#4c4c4c" />
<rect x="942.5" y="776.5" width="147.4" height="153.5" fill="none" stroke="#f0f0f0" stroke-width="2"/>
<text x="1016.2" y="954.0" font-size="20.06" text-anchor="middle" font-weight="normal" fill="#f0f0f0" stroke="#f0f0f0" stroke-width="0.3">30</text>
<rect x="1117.3" y="776.5" width="147.4" height="153.5" fill="#666666" />
<rect x="1117.3" y="776.5" width="147.4" height="153.5" fill="none" stroke="#f0f0f0" stroke-width="2"/>
<text x="1191.0" y="954.0" font-size="20.06" text-anchor="middle" font-weight="normal" fill="#f0f0f0" stroke="#f0f0f0" stroke-width="0.3">40</text>
<rect x="1292.1" y="776.5" width="147.4" height="153.5" fill="#808080" />
<rect x="1292.1" y="776.5" width="147.4" height="153.5" fill="none" stroke="#f0f0f0" stroke-width="2"/>
<text x="1365.8" y="954.0" font-size="20.06" text-anchor="middle" font-weight="normal" fill="#f0f0f0" stroke="#f0f0f0" stroke-width="0.3">50</text>
<rect x="1466.9" y="776.5" width="147.4" height="153.5" fill="#999999" />
<rect x="1466.9" y="776.5" width="147.4" height="153.5" fill="none" stroke="#f0f0f0" stroke-width="2"/>
<text x="1540.6" y="954.0" font-size="20.06" text-anchor="middle" font-weight="normal" fill="#f0f0f0" stroke="#f0f0f0" stroke-width="0.3">60</text>
<rect x="1641.7" y="776.5" width="147.4" height="153.5" fill="#b2b2b2" />
<rect x="1641.7" y="776.5" width="147.4" height="153.5" fill="none" stroke="#f0f0f0" stroke-width="2"/>
<text x="1715.4" y="954.0" font-size="20.06" text-anchor="middle" font-weight="normal" fill="#f0f0f0" stroke="#f0f0f0" stroke-width="0.3">70</text>
<rect x="1816.5" y="776.5" width="147.4" height="153.5" fill="#cccccc" />
<rect x="1816.5" y="776.5" width="147.4" height="153.5" fill="none" stroke="#f0f0f0" stroke-width="2"/>
<text x="1890.2" y="954.0" font-size="20.06" text-anchor="middle" font-weight="normal" fill="#f0f0f0" stroke="#f0f0f0" stroke-width="0.3">80</text>
<rect x="1991.3" y="776.5" width="147.4" height="153.5" fill="#e6e6e6" />
<rect x="1991.3" y="776.5" width="147.4" height="153.5" fill="none" stroke="#f0f0f0" stroke-width="2"/>
<text x="2065.0" y="954.0" font-size="20.06" text-anchor="middle" font-weight="normal" fill="#f0f0f0" stroke="#f0f0f0" stroke-width="0.3">90</text>
<rect x="2166.1" y="776.5" width="147.4" height="153.5" fill="#ffffff" />
<rect x="2166.1" y="776.5" width="147.4" height="153.5" fill="none" stroke="#f0f0f0" stroke-width="2"/>
<text x="2239.8" y="954.0" font-size="20.06" text-anchor="middle" font-weight="normal" fill="#f0f0f0" stroke="#f0f0f0" stroke-width="0.3">100</text>
<text x="32.17" y="1047.0" font-size="45.78" font-weight="normal" fill="#f0f0f0" textLength="336.38" lengthAdjust="spacingAndGlyphs" stroke="#f0f0f0" stroke-width="0.5">Current Reading</text>
<text x="34.07" y="1112.0" font-size="38.23" font-weight="normal" fill="#f0f0f0" textLength="156.04" lengthAdjust="spacingAndGlyphs" stroke="#f0f0f0" stroke-width="0.5">x: 0,3114</text>
<text x="34.41" y="1173.7" font-size="38.23" font-weight="normal" fill="#f0f0f0" textLength="157.91" lengthAdjust="spacingAndGlyphs" stroke="#f0f0f0" stroke-width="0.5">y: 0,3269</text>
<text x="33.96" y="1235.6" font-size="38.23" font-weight="normal" fill="#f0f0f0" textLength="127.11" lengthAdjust="spacingAndGlyphs" stroke="#f0f0f0" stroke-width="0.5">fL: 87,6</text>
<text x="32.81" y="1297.5" font-size="38.23" font-weight="normal" fill="#f0f0f0" textLength="243.75" lengthAdjust="spacingAndGlyphs" stroke="#f0f0f0" stroke-width="0.5">cd/m²: 300,13</text>
<rect x="509.3" y="999.3" width="444.7" height="326.7" fill="#e6e6e6" />
<rect x="519.5" y="1009.5" width="424.5" height="306.5" fill="#333333" />
<defs><linearGradient id="cie0"><stop offset="0.000" stop-color="#88f8c2"/><stop offset="0.125" stop-color="#9df9c1"/><stop offset="0.250" stop-color="#b1fac1"/><stop offset="0.375" stop-color="#cbfbc4"/><stop offset="0.500" stop-color="#e5fcc6"/><stop offset="0.625" stop-color="#f2fcc5"/><stop offset="0.750" stop-color="#fffcc5"/><stop offset="0.875" stop-color="#ffe9b7"/><stop offset="1.000" stop-color="#ffd7a8"/></linearGradient><linearGradient id="cie1"><stop offset="0.000" stop-color="#89f8c5"/><stop offset="0.125" stop-color="#9ef9c4"/><stop offset="0.250" stop-color="#b2fac4"/><stop offset="0.375" stop-color="#ccfbc6"/><stop offset="0.500" stop-color="#e6fcc9"/><stop offset="0.625" stop-color="#f3fbc8"/><stop offset="0.750" stop-color="#fffbc7"/><stop offset="0.875" stop-color="#ffe8b8"/><stop offset="1.000" stop-color="#ffd6a9"/></linearGradient><linearGradient id="cie2"><stop offset="0.000" stop-color="#8af9c8"/><stop offset="0.125" stop-color="#9ffac7"/><stop offset="0.250" stop-color="#b4fac6"/><stop offset="0.375" stop-color="#cefbca"/><stop offset="0.500" stop-color="#e8fdcd"/><stop offset="0.625" stop-color="#f3fbcb"/><stop offset="0.750" stop-color="#fffac8"/><stop offset="0.875" stop-color="#ffe7b9"/><stop offset="1.000" stop-color="#ffd4aa"/></linearGradient><linearGradient id="cie3"><stop offset="0.000" stop-color="#8af9cc"/><stop offset="0.125" stop-color="#a0faca"/><stop offset="0.250" stop-color="#b5fbc8"/><stop offset="0.375" stop-color="#cffccc"/><stop offset="0.500" stop-color="#e9fdd1"/><stop offset="0.625" stop-color="#f4fbcd"/><stop offset="0.750" stop-color="#fff9ca"/><stop offset="0.875" stop-color="#ffe6ba"/><stop offset="1.000" stop-color="#ffd3aa"/></linearGradient><linearGradient id="cie4"><stop offset="0.000" stop-color="#8bf9cf"/><stop offset="0.125" stop-color="#a1facd"/><stop offset="0.250" stop-color="#b7fbcb"/><stop offset="0.375" stop-color="#d1fcd0"/><stop offset="0.500" stop-color="#ebfdd4"/><stop offset="0.625" stop-color="#f5fad0"/><stop offset="0.750" stop-color="#fff8cc"/><stop offset="0.875" stop-color="#ffe5bb"/><stop offset="1.000" stop-color="#ffd1ab"/></linearGradient><linearGradient id="cie5"><stop offset="0.000" stop-color="#8bfad2"/><stop offset="0.125" stop-color="#a2fad0"/><stop offset="0.250" stop-color="#b8fbcd"/><stop offset="0.375" stop-color="#d2fcd2"/><stop offset="0.500" stop-color="#ecfdd8"/><stop offset="0.625" stop-color="#f6fad3"/><stop offset="0.750" stop-color="#fff7ce"/><stop offset="0.875" stop-color="#ffe3bd"/><stop offset="1.000" stop-color="#ffd0ab"/></linearGradient><linearGradient id="cie6"><stop offset="0.000" stop-color="#8cfad5"/><stop offset="0.125" stop-color="#a3fad3"/><stop offset="0.250" stop-color="#bafbd0"/><stop offset="0.375" stop-color="#d4fcd6"/><stop offset="0.500" stop-color="#eefddb"/><stop offset="0.625" stop-color="#f6fad6"/><stop offset="0.750" stop-color="#fff6d0"/><stop offset="0.875" stop-color="#ffe2be"/><stop offset="1.000" stop-color="#ffceac"/></linearGradient><linearGradient id="cie7"><stop offset="0.000" stop-color="#8cfad9"/><stop offset="0.125" stop-color="#a4fbd5"/><stop offset="0.250" stop-color="#bbfbd2"/><stop offset="0.375" stop-color="#d5fcd8"/><stop offset="0.500" stop-color="#effedf"/><stop offset="0.625" stop-color="#f7f9d8"/><stop offset="0.750" stop-color="#fff5d2"/><stop offset="0.875" stop-color="#ffe1bf"/><stop offset="1.000" stop-color="#ffcdac"/></linearGradient><linearGradient id="cie8"><stop offset="0.000" stop-color="#8dfbdc"/><stop offset="0.125" stop-color="#a5fbd8"/><stop offset="0.250" stop-color="#bdfbd4"/><stop offset="0.375" stop-color="#d7fddc"/><stop offset="0.500" stop-color="#f1fee3"/><stop offset="0.625" stop-color="#f8f9db"/><stop offset="0.750" stop-color="#fff4d3"/><stop offset="0.875" stop-color="#ffe0c0"/><stop offset="1.000" stop-color="#ffcbad"/></linearGradient><linearGradient id="cie9"><stop offset="0.000" stop-color="#8efbdf"/><stop offset="0.125" stop-color="#a6fbdb"/><stop offset="0.250" stop-color="#befbd7"/><stop offset="0.375" stop-color="#d8fdde"/><stop offset="0.500" stop-color="#f2fee6"/><stop offset="0.625" stop-color="#f9f9de"/><stop offset="0.750" stop-color="#fff3d5"/><stop offset="0.875" stop-color="#ffdfc1"/><stop offset="1.000" stop-color="#ffcaae"/></linearGradient><linearGradient id="cie10"><stop offset="0.000" stop-color="#8efbe3"/><stop offset="0.125" stop-color="#a7fbde"/><stop offset="0.250" stop-color="#c0fcd9"/><stop offset="0.375" stop-color="#dafde2"/><stop offset="0.500" stop-color="#f4feea"/><stop offset="0.625" stop-color="#f9f8e0"/><stop offset="0.750" stop-color="#fff3d7"/><stop offset="0.875" stop-color="#ffddc3"/><stop offset="1.000" stop-color="#ffc8ae"/></linearGradient><linearGradient id="cie11"><stop offset="0.000" stop-color="#8ffbe6"/><stop offset="0.125" stop-color="#a8fce1"/><stop offset="0.250" stop-color="#c1fcdc"/><stop offset="0.375" stop-color="#dbfde4"/><stop offset="0.500" stop-color="#f5ffed"/><stop offset="0.625" stop-color="#faf8e3"/><stop offset="0.750" stop-color="#fff2d9"/><stop offset="0.875" stop-color="#ffdcc4"/><stop offset="1.000" stop-color="#ffc7af"/></linearGradient><linearGradient id="cie12"><stop offset="0.000" stop-color="#90fce9"/><stop offset="0.125" stop-color="#a9fce4"/><stop offset="0.250" stop-color="#c3fcde"/><stop offset="0.375" stop-color="#ddfde8"/><stop offset="0.500" stop-color="#f7fff1"/><stop offset="0.625" stop-color="#fbf8e6"/><stop offset="0.750" stop-color="#fff1da"/><stop offset="0.875" stop-color="#ffdbc5"/><stop offset="1.000" stop-color="#ffc5b0"/></linearGradient><linearGradient id="cie13"><stop offset="0.000" stop-color="#90fcec"/><stop offset="0.125" stop-color="#aafce6"/><stop offset="0.250" stop-color="#c4fce0"/><stop offset="0.375" stop-color="#defdea"/><stop offset="0.500" stop-color="#f8fff4"/><stop offset="0.625" stop-color="#fcf7e8"/><stop offset="0.750" stop-color="#fff0dc"/><stop offset="0.875" stop-color="#ffdac6"/><stop offset="1.000" stop-color="#ffc4b0"/></linearGradient><linearGradient id="cie14"><stop offset="0.000" stop-color="#91fbee"/><stop offset="0.125" stop-color="#abfbe8"/><stop offset="0.250" stop-color="#c5fce3"/><stop offset="0.375" stop-color="#dffdec"/><stop offset="0.500" stop-color="#f9fef5"/><stop offset="0.625" stop-color="#fcf6e9"/><stop offset="0.750" stop-color="#ffeedc"/><stop offset="0.875" stop-color="#ffd8c7"/><stop offset="1.000" stop-color="#ffc2b1"/></linearGradient><linearGradient id="cie15"><stop offset="0.000" stop-color="#92fbef"/><stop offset="0.125" stop-color="#acfbea"/><stop offset="0.250" stop-color="#c7fbe5"/><stop offset="0.375" stop-color="#e0fced"/><stop offset="0.500" stop-color="#f9fdf5"/><stop offset="0.625" stop-color="#fcf4e9"/><stop offset="0.750" stop-color="#ffebdd"/><stop offset="0.875" stop-color="#ffd6c7"/><stop offset="1.000" stop-color="#ffc0b1"/></linearGradient><linearGradient id="cie16"><stop offset="0.000" stop-color="#93faf1"/><stop offset="0.125" stop-color="#adfbec"/><stop offset="0.250" stop-color="#c8fbe7"/><stop offset="0.375" stop-color="#e1fbef"/><stop offset="0.500" stop-color="#fafbf6"/><stop offset="0.625" stop-color="#fcf2e9"/><stop offset="0.750" stop-color="#ffe9dd"/><stop offset="0.875" stop-color="#ffd4c7"/><stop offset="1.000" stop-color="#ffbeb2"/></linearGradient><linearGradient id="cie17"><stop offset="0.000" stop-color="#94faf2"/><stop offset="0.125" stop-color="#aefaee"/><stop offset="0.250" stop-color="#c9fbea"/><stop offset="0.375" stop-color="#e2fbf0"/><stop offset="0.500" stop-color="#fafaf6"/><stop offset="0.625" stop-color="#fdf1ea"/><stop offset="0.750" stop-color="#ffe7dd"/><stop offset="0.875" stop-color="#ffd2c8"/><stop offset="1.000" stop-color="#ffbcb2"/></linearGradient><linearGradient id="cie18"><stop offset="0.000" stop-color="#95f9f3"/><stop offset="0.125" stop-color="#affaf0"/><stop offset="0.250" stop-color="#cafaec"/><stop offset="0.375" stop-color="#e2faf2"/><stop offset="0.500" stop-color="#fbf9f7"/><stop offset="0.625" stop-color="#fdefea"/><stop offset="0.750" stop-color="#ffe5de"/><stop offset="0.875" stop-color="#ffd0c8"/><stop offset="1.000" stop-color="#ffbbb3"/></linearGradient><linearGradient id="cie19"><stop offset="0.000" stop-color="#96f8f5"/><stop offset="0.125" stop-color="#b0f9f2"/><stop offset="0.250" stop-color="#cbfaee"/><stop offset="0.375" stop-color="#e3f9f3"/><stop offset="0.500" stop-color="#fbf8f8"/><stop offset="0.625" stop-color="#fdeeeb"/><stop offset="0.750" stop-color="#ffe3de"/><stop offset="0.875" stop-color="#ffcec9"/><stop offset="1.000" stop-color="#ffb9b4"/></linearGradient><linearGradient id="cie20"><stop offset="0.000" stop-color="#96f8f6"/><stop offset="0.125" stop-color="#b2f9f3"/><stop offset="0.250" stop-color="#cdfaf1"/><stop offset="0.375" stop-color="#e4f8f4"/><stop offset="0.500" stop-color="#fcf7f8"/><stop offset="0.625" stop-color="#fdeceb"/><stop offset="0.750" stop-color="#ffe1de"/><stop offset="0.875" stop-color="#ffccc9"/><stop offset="1.000" stop-color="#ffb7b4"/></linearGradient><linearGradient id="cie21"><stop offset="0.000" stop-color="#97f7f8"/><stop offset="0.125" stop-color="#b3f8f5"/><stop offset="0.250" stop-color="#cefaf3"/><stop offset="0.375" stop-color="#e5f8f6"/><stop offset="0.500" stop-color="#fcf6f9"/><stop offset="0.625" stop-color="#feeaec"/><stop offset="0.750" stop-color="#ffdfde"/><stop offset="0.875" stop-color="#ffcaca"/><stop offset="1.000" stop-color="#ffb5b5"/></linearGradient><linearGradient id="cie22"><stop offset="0.000" stop-color="#98f6f9"/><stop offset="0.125" stop-color="#b4f8f7"/><stop offset="0.250" stop-color="#cff9f5"/><stop offset="0.375" stop-color="#e6f7f7"/><stop offset="0.500" stop-color="#fdf5fa"/><stop offset="0.625" stop-color="#fee9ec"/><stop offset="0.750" stop-color="#ffdddf"/><stop offset="0.875" stop-color="#ffc8ca"/><stop offset="1.000" stop-color="#ffb4b6"/></linearGradient><linearGradient id="cie23"><stop offset="0.000" stop-color="#99f6fa"/><stop offset="0.125" stop-color="#b5f7f9"/><stop offset="0.250" stop-color="#d0f9f8"/><stop offset="0.375" stop-color="#e7f6f9"/><stop offset="0.500" stop-color="#fdf4fa"/><stop offset="0.625" stop-color="#fee7ed"/><stop offset="0.750" stop-color="#ffdbdf"/><stop offset="0.875" stop-color="#ffc6cb"/><stop offset="1.000" stop-color="#ffb2b6"/></linearGradient><linearGradient id="cie24"><stop offset="0.000" stop-color="#9af5fc"/><stop offset="0.125" stop-color="#b6f7fb"/><stop offset="0.250" stop-color="#d1f9fa"/><stop offset="0.375" stop-color="#e8f6fa"/><stop offset="0.500" stop-color="#fef2fb"/><stop offset="0.625" stop-color="#fee5ed"/><stop offset="0.750" stop-color="#ffd9df"/><stop offset="0.875" stop-color="#ffc4cb"/><stop offset="1.000" stop-color="#ffb0b7"/></linearGradient><linearGradient id="cie25"><stop offset="0.000" stop-color="#9bf5fd"/><stop offset="0.125" stop-color="#b7f7fd"/><stop offset="0.250" stop-color="#d3f8fc"/><stop offset="0.375" stop-color="#e8f5fc"/><stop offset="0.500" stop-color="#fef1fb"/><stop offset="0.625" stop-color="#ffe4ed"/><stop offset="0.750" stop-color="#ffd6e0"/><stop offset="0.875" stop-color="#ffc2cb"/><stop offset="1.000" stop-color="#ffaeb7"/></linearGradient><linearGradient id="cie26"><stop offset="0.000" stop-color="#9cf4ff"/><stop offset="0.125" stop-color="#b8f6ff"/><stop offset="0.250" stop-color="#d4f8ff"/><stop offset="0.375" stop-color="#e9f4fd"/><stop offset="0.500" stop-color="#fff0fc"/><stop offset="0.625" stop-color="#ffe2ee"/><stop offset="0.750" stop-color="#ffd4e0"/><stop offset="0.875" stop-color="#ffc0cc"/><stop offset="1.000" stop-color="#ffacb8"/></linearGradient><linearGradient id="cie27"><stop offset="0.000" stop-color="#9cf1ff"/><stop offset="0.125" stop-color="#b8f3ff"/><stop offset="0.250" stop-color="#d4f5ff"/><stop offset="0.375" stop-color="#e9f1fe"/><stop offset="0.500" stop-color="#ffedfc"/><stop offset="0.625" stop-color="#ffdfee"/><stop offset="0.750" stop-color="#ffd1df"/><stop offset="0.875" stop-color="#ffbecc"/><stop offset="1.000" stop-color="#ffaab8"/></linearGradient><linearGradient id="cie28"><stop offset="0.000" stop-color="#9dedff"/><stop offset="0.125" stop-color="#b8efff"/><stop offset="0.250" stop-color="#d3f1ff"/><stop offset="0.375" stop-color="#e9edfe"/><stop offset="0.500" stop-color="#ffe9fc"/><stop offset="0.625" stop-color="#ffdced"/><stop offset="0.750" stop-color="#ffcede"/><stop offset="0.875" stop-color="#ffbbcb"/><stop offset="1.000" stop-color="#ffa8b8"/></linearGradient><linearGradient id="cie29"><stop offset="0.000" stop-color="#9eeaff"/><stop offset="0.125" stop-color="#b8ebff"/><stop offset="0.250" stop-color="#d3edff"/><stop offset="0.375" stop-color="#e9e9fe"/><stop offset="0.500" stop-color="#fee6fc"/><stop offset="0.625" stop-color="#ffd8ec"/><stop offset="0.750" stop-color="#ffcbdd"/><stop offset="0.875" stop-color="#ffb8ca"/><stop offset="1.000" stop-color="#ffa5b8"/></linearGradient><linearGradient id="cie30"><stop offset="0.000" stop-color="#9ee6ff"/><stop offset="0.125" stop-color="#b9e8ff"/><stop offset="0.250" stop-color="#d3e9ff"/><stop offset="0.375" stop-color="#e8e6fe"/><stop offset="0.500" stop-color="#fee2fc"/><stop offset="0.625" stop-color="#ffd5ec"/><stop offset="0.750" stop-color="#ffc7db"/><stop offset="0.875" stop-color="#ffb5ca"/><stop offset="1.000" stop-color="#ffa3b8"/></linearGradient><linearGradient id="cie31"><stop offset="0.000" stop-color="#9fe3ff"/><stop offset="0.125" stop-color="#b9e4ff"/><stop offset="0.250" stop-color="#d3e5ff"/><stop offset="0.375" stop-color="#e8e2fe"/><stop offset="0.500" stop-color="#fedffc"/><stop offset="0.625" stop-color="#fed1eb"/><stop offset="0.750" stop-color="#ffc4da"/><stop offset="0.875" stop-color="#ffb2c9"/><stop offset="1.000" stop-color="#ffa0b8"/></linearGradient><linearGradient id="cie32"><stop offset="0.000" stop-color="#a0dfff"/><stop offset="0.125" stop-color="#b9e0ff"/><stop offset="0.250" stop-color="#d2e1ff"/><stop offset="0.375" stop-color="#e8defe"/><stop offset="0.500" stop-color="#fedbfc"/><stop offset="0.625" stop-color="#feceea"/><stop offset="0.750" stop-color="#ffc1d9"/><stop offset="0.875" stop-color="#ffafc8"/><stop offset="1.000" stop-color="#ff9eb8"/></linearGradient><linearGradient id="cie33"><stop offset="0.000" stop-color="#a0dbff"/><stop offset="0.125" stop-color="#b9dcff"/><stop offset="0.250" stop-color="#d2ddff"/><stop offset="0.375" stop-color="#e8dafe"/><stop offset="0.500" stop-color="#fdd7fc"/><stop offset="0.625" stop-color="#fecaea"/><stop offset="0.750" stop-color="#ffbdd8"/><stop offset="0.875" stop-color="#ffadc8"/><stop offset="1.000" stop-color="#ff9cb8"/></linearGradient><linearGradient id="cie34"><stop offset="0.000" stop-color="#a1d8ff"/><stop offset="0.125" stop-color="#b9d9ff"/><stop offset="0.250" stop-color="#d2d9ff"/><stop offset="0.375" stop-color="#e7d7fe"/><stop offset="0.500" stop-color="#fdd4fc"/><stop offset="0.625" stop-color="#fec7e9"/><stop offset="0.750" stop-color="#ffbad7"/><stop offset="0.875" stop-color="#ffaac7"/><stop offset="1.000" stop-color="#ff99b8"/></linearGradient><linearGradient id="cie35"><stop offset="0.000" stop-color="#a1d4ff"/><stop offset="0.125" stop-color="#b9d5ff"/><stop offset="0.250" stop-color="#d1d6ff"/><stop offset="0.375" stop-color="#e7d3fe"/><stop offset="0.500" stop-color="#fdd0fc"/><stop offset="0.625" stop-color="#fec4e9"/><stop offset="0.750" stop-color="#ffb7d5"/><stop offset="0.875" stop-color="#ffa7c7"/><stop offset="1.000" stop-color="#ff97b8"/></linearGradient><linearGradient id="cie36"><stop offset="0.000" stop-color="#a2d1ff"/><stop offset="0.125" stop-color="#b9d1ff"/><stop offset="0.250" stop-color="#d1d2ff"/><stop offset="0.375" stop-color="#e7cffe"/><stop offset="0.500" stop-color="#fdcdfc"/><stop offset="0.625" stop-color="#fec0e8"/><stop offset="0.750" stop-color="#ffb4d4"/><stop offset="0.875" stop-color="#ffa4c6"/><stop offset="1.000" stop-color="#ff94b8"/></linearGradient><linearGradient id="cie37"><stop offset="0.000" stop-color="#a2cdff"/><stop offset="0.125" stop-color="#bacdff"/><stop offset="0.250" stop-color="#d1ceff"/><stop offset="0.375" stop-color="#e7cbfe"/><stop offset="0.500" stop-color="#fdc9fc"/><stop offset="0.625" stop-color="#febde8"/><stop offset="0.750" stop-color="#ffb0d3"/><stop offset="0.875" stop-color="#ffa1c6"/><stop offset="1.000" stop-color="#ff92b8"/></linearGradient><linearGradient id="cie38"><stop offset="0.000" stop-color="#a3c9ff"/><stop offset="0.125" stop-color="#bacaff"/><stop offset="0.250" stop-color="#d0caff"/><stop offset="0.375" stop-color="#e6c8fe"/><stop offset="0.500" stop-color="#fcc5fc"/><stop offset="0.625" stop-color="#feb9e7"/><stop offset="0.750" stop-color="#ffadd2"/><stop offset="0.875" stop-color="#ff9ec5"/><stop offset="1.000" stop-color="#ff90b8"/></linearGradient><linearGradient id="cie39"><stop offset="0.000" stop-color="#a4c6ff"/><stop offset="0.125" stop-color="#bac6ff"/><stop offset="0.250" stop-color="#d0c6ff"/><stop offset="0.375" stop-color="#e6c4fe"/><stop offset="0.500" stop-color="#fcc2fc"/><stop offset="0.625" stop-color="#feb6e6"/><stop offset="0.750" stop-color="#ffaad1"/><stop offset="0.875" stop-color="#ff9bc4"/><stop offset="1.000" stop-color="#ff8db8"/></linearGradient></defs>
<rect x="576.2" y="1013.70" width="363.5" height="7.15" fill="url(#cie0)"/><rect x="576.2" y="1020.25" width="363.5" height="7.15" fill="url(#cie1)"/><rect x="576.2" y="1026.81" width="363.5" height="7.15" fill="url(#cie2)"/><rect x="576.2" y="1033.36" width="363.5" height="7.15" fill="url(#cie3)"/><rect x="576.2" y="1039.91" width="363.5" height="7.15" fill="url(#cie4)"/><rect x="576.2" y="1046.46" width="363.5" height="7.15" fill="url(#cie5)"/><rect x="576.2" y="1053.02" width="363.5" height="7.15" fill="url(#cie6)"/><rect x="576.2" y="1059.57" width="363.5" height="7.15" fill="url(#cie7)"/><rect x="576.2" y="1066.12" width="363.5" height="7.15" fill="url(#cie8)"/><rect x="576.2" y="1072.67" width="363.5" height="7.15" fill="url(#cie9)"/><rect x="576.2" y="1079.22" width="363.5" height="7.15" fill="url(#cie10)"/><rect x="576.2" y="1085.78" width="363.5" height="7.15" fill="url(#cie11)"/><rect x="576.2" y="1092.33" width="363.5" height="7.15" fill="url(#cie12)"/><rect x="576.2" y="1098.88" width="363.5" height="7.15" fill="url(#cie13)"/><rect x="576.2" y="1105.43" width="363.5" height="7.15" fill="url(#cie14)"/><rect x="576.2" y="1111.99" width="363.5" height="7.15" fill="url(#cie15)"/><rect x="576.2" y="1118.54" width="363.5" height="7.15" fill="url(#cie16)"/><rect x="576.2" y="1125.09" width="363.5" height="7.15" fill="url(#cie17)"/><rect x="576.2" y="1131.64" width="363.5" height="7.15" fill="url(#cie18)"/><rect x="576.2" y="1138.20" width="363.5" height="7.15" fill="url(#cie19)"/><rect x="576.2" y="1144.75" width="363.5" height="7.15" fill="url(#cie20)"/><rect x="576.2" y="1151.30" width="363.5" height="7.15" fill="url(#cie21)"/><rect x="576.2" y="1157.86" width="363.5" height="7.15" fill="url(#cie22)"/><rect x="576.2" y="1164.41" width="363.5" height="7.15" fill="url(#cie23)"/><rect x="576.2" y="1170.96" width="363.5" height="7.15" fill="url(#cie24)"/><rect x="576.2" y="1177.51" width="363.5" height="7.15" fill="url(#cie25)"/><rect x="576.2" y="1184.07" width="363.5" height="7.15" fill="url(#cie26)"/><rect x="576.2" y="1190.62" width="363.5" height="7.15" fill="url(#cie27)"/><rect x="576.2" y="1197.17" width="363.5" height="7.15" fill="url(#cie28)"/><rect x="576.2" y="1203.72" width="363.5" height="7.15" fill="url(#cie29)"/><rect x="576.2" y="1210.28" width="363.5" height="7.15" fill="url(#cie30)"/><rect x="576.2" y="1216.83" width="363.5" height="7.15" fill="url(#cie31)"/><rect x="576.2" y="1223.38" width="363.5" height="7.15" fill="url(#cie32)"/><rect x="576.2" y="1229.93" width="363.5" height="7.15" fill="url(#cie33)"/><rect x="576.2" y="1236.48" width="363.5" height="7.15" fill="url(#cie34)"/><rect x="576.2" y="1243.04" width="363.5" height="7.15" fill="url(#cie35)"/><rect x="576.2" y="1249.59" width="363.5" height="7.15" fill="url(#cie36)"/><rect x="576.2" y="1256.14" width="363.5" height="7.15" fill="url(#cie37)"/><rect x="576.2" y="1262.69" width="363.5" height="7.15" fill="url(#cie38)"/><rect x="576.2" y="1269.25" width="363.5" height="7.15" fill="url(#cie39)"/>
<rect x="576.2" y="1013.7" width="363.5" height="262.1" fill="none" stroke="#8a8a8a" stroke-width="2.5"/>
<line x1="568.0" y1="1245.1" x2="576.2" y2="1245.1" stroke="#e0e0e0" stroke-width="1.5" />
<text x="566.0" y="1252.6" font-size="21.51" text-anchor="end" font-weight="normal" fill="#e0e0e0" >0,31</text>
<line x1="568.0" y1="1192.7" x2="576.2" y2="1192.7" stroke="#e0e0e0" stroke-width="1.5" />
<text x="566.0" y="1200.2" font-size="21.51" text-anchor="end" font-weight="normal" fill="#e0e0e0" >0,32</text>
<line x1="568.0" y1="1140.3" x2="576.2" y2="1140.3" stroke="#e0e0e0" stroke-width="1.5" />
<text x="566.0" y="1147.8" font-size="21.51" text-anchor="end" font-weight="normal" fill="#e0e0e0" >0,33</text>
<line x1="568.0" y1="1087.9" x2="576.2" y2="1087.9" stroke="#e0e0e0" stroke-width="1.5" />
<text x="566.0" y="1095.4" font-size="21.51" text-anchor="end" font-weight="normal" fill="#e0e0e0" >0,34</text>
<line x1="568.0" y1="1035.5" x2="576.2" y2="1035.5" stroke="#e0e0e0" stroke-width="1.5" />
<text x="566.0" y="1043.0" font-size="21.51" text-anchor="end" font-weight="normal" fill="#e0e0e0" >0,35</text>
<line x1="591.2" y1="1275.8" x2="591.2" y2="1285.0" stroke="#e0e0e0" stroke-width="2" />
<text x="591.2" y="1307.8" font-size="21.51" text-anchor="middle" font-weight="normal" fill="#e0e0e0" >0,29</text>
<line x1="663.6" y1="1275.8" x2="663.6" y2="1285.0" stroke="#e0e0e0" stroke-width="2" />
<text x="663.6" y="1307.8" font-size="21.51" text-anchor="middle" font-weight="normal" fill="#e0e0e0" >0,3</text>
<line x1="736.0" y1="1275.8" x2="736.0" y2="1285.0" stroke="#e0e0e0" stroke-width="2" />
<text x="736.0" y="1307.8" font-size="21.51" text-anchor="middle" font-weight="normal" fill="#e0e0e0" >0,31</text>
<line x1="808.4" y1="1275.8" x2="808.4" y2="1285.0" stroke="#e0e0e0" stroke-width="2" />
<text x="808.4" y="1307.8" font-size="21.51" text-anchor="middle" font-weight="normal" fill="#e0e0e0" >0,32</text>
<line x1="880.8" y1="1275.8" x2="880.8" y2="1285.0" stroke="#e0e0e0" stroke-width="2" />
<text x="880.8" y="1307.8" font-size="21.51" text-anchor="middle" font-weight="normal" fill="#e0e0e0" >0,33</text>
<clipPath id="cieclip"><rect x="576.2" y="1013.7" width="363.5" height="262.1"/></clipPath>
<line x1="615" y1="1281" x2="940" y2="1055.5" stroke="#000" stroke-width="3.5" clip-path="url(#cieclip)"/>
<circle cx="722" cy="1188" r="6.6" fill="#151515" stroke="#000" stroke-width="1"/>
<circle cx="740.8" cy="1169.7" r="6.6" fill="#404040" stroke="#000" stroke-width="1"/>
<circle cx="746.5" cy="1151" r="6.4" fill="#505050" stroke="#000" stroke-width="1.2"/>
<circle cx="745" cy="1153.5" r="6.4" fill="#fff" stroke="#555" stroke-width="1.2"/>
<rect x="748.5" y="1135.3" width="18.8" height="18.8" fill="#fff" stroke="#000" stroke-width="2.3"/>
<circle cx="747" cy="1155" r="6" fill="#fff" stroke="#222" stroke-width="1.2"/>
<rect x="965.5" y="978.5" width="1352.5" height="318.5" fill="#0c0c0c" />
<defs><linearGradient id="thead" x1="0" x2="0" y1="0" y2="1"><stop offset="0" stop-color="#3a3a3a"/><stop offset="0.5" stop-color="#323232"/><stop offset="0.53" stop-color="#1e1e1e"/><stop offset="1" stop-color="#151515"/></linearGradient></defs>
<rect x="967.5" y="980.5" width="1349.0" height="42.5" fill="url(#thead)" />
<text x="1246.42" y="1009.8" font-size="22.09" font-weight="normal" fill="#f6f6f6" textLength="13.96" lengthAdjust="spacingAndGlyphs" stroke="#f6f6f6" stroke-width="0.35">0</text>
<text x="1345.15" y="1009.8" font-size="22.09" font-weight="normal" fill="#f6f6f6" textLength="26.22" lengthAdjust="spacingAndGlyphs" stroke="#f6f6f6" stroke-width="0.35">10</text>
<text x="1443.39" y="1009.8" font-size="22.09" font-weight="normal" fill="#f6f6f6" textLength="25.55" lengthAdjust="spacingAndGlyphs" stroke="#f6f6f6" stroke-width="0.35">20</text>
<text x="1542.09" y="1009.8" font-size="22.09" font-weight="normal" fill="#f6f6f6" textLength="25.25" lengthAdjust="spacingAndGlyphs" stroke="#f6f6f6" stroke-width="0.35">30</text>
<text x="1640.24" y="1009.8" font-size="22.09" font-weight="normal" fill="#f6f6f6" textLength="24.89" lengthAdjust="spacingAndGlyphs" stroke="#f6f6f6" stroke-width="0.35">40</text>
<text x="1738.04" y="1009.8" font-size="22.09" font-weight="normal" fill="#f6f6f6" textLength="25.30" lengthAdjust="spacingAndGlyphs" stroke="#f6f6f6" stroke-width="0.35">50</text>
<text x="1835.88" y="1009.8" font-size="22.09" font-weight="normal" fill="#f6f6f6" textLength="25.56" lengthAdjust="spacingAndGlyphs" stroke="#f6f6f6" stroke-width="0.35">60</text>
<text x="1934.37" y="1009.8" font-size="22.09" font-weight="normal" fill="#f6f6f6" textLength="25.58" lengthAdjust="spacingAndGlyphs" stroke="#f6f6f6" stroke-width="0.35">70</text>
<text x="2032.26" y="1009.8" font-size="22.09" font-weight="normal" fill="#f6f6f6" textLength="25.38" lengthAdjust="spacingAndGlyphs" stroke="#f6f6f6" stroke-width="0.35">80</text>
<text x="2130.68" y="1009.8" font-size="22.09" font-weight="normal" fill="#f6f6f6" textLength="25.47" lengthAdjust="spacingAndGlyphs" stroke="#f6f6f6" stroke-width="0.35">90</text>
<text x="2235.81" y="1009.8" font-size="22.09" font-weight="normal" fill="#f6f6f6" textLength="38.13" lengthAdjust="spacingAndGlyphs" stroke="#f6f6f6" stroke-width="0.35">100</text>
<rect x="967.5" y="1023.0" width="1349.0" height="39.4" fill="#434343" />
<text x="985.04" y="1052.0" font-size="25.00" font-weight="bold" fill="#f4f4f4" textLength="91.81" lengthAdjust="spacingAndGlyphs" >x: CIE31</text>
<text x="1203.27" y="1052.0" font-size="25.00" font-weight="normal" fill="#f4f4f4" textLength="46.23" lengthAdjust="spacingAndGlyphs" >0,25</text>
<text x="1315.11" y="1052.0" font-size="25.00" font-weight="normal" fill="#f4f4f4" textLength="44.30" lengthAdjust="spacingAndGlyphs" >0,31</text>
<text x="1413.11" y="1052.0" font-size="25.00" font-weight="normal" fill="#f4f4f4" textLength="44.30" lengthAdjust="spacingAndGlyphs" >0,31</text>
<text x="1511.51" y="1052.0" font-size="25.00" font-weight="normal" fill="#f4f4f4" textLength="44.30" lengthAdjust="spacingAndGlyphs" >0,31</text>
<text x="1609.41" y="1052.0" font-size="25.00" font-weight="normal" fill="#f4f4f4" textLength="44.30" lengthAdjust="spacingAndGlyphs" >0,31</text>
<text x="1707.31" y="1052.0" font-size="25.00" font-weight="normal" fill="#f4f4f4" textLength="44.30" lengthAdjust="spacingAndGlyphs" >0,31</text>
<text x="1805.71" y="1052.0" font-size="25.00" font-weight="normal" fill="#f4f4f4" textLength="44.30" lengthAdjust="spacingAndGlyphs" >0,31</text>
<text x="1904.11" y="1052.0" font-size="25.00" font-weight="normal" fill="#f4f4f4" textLength="44.30" lengthAdjust="spacingAndGlyphs" >0,31</text>
<text x="2001.91" y="1052.0" font-size="25.00" font-weight="normal" fill="#f4f4f4" textLength="44.30" lengthAdjust="spacingAndGlyphs" >0,31</text>
<text x="2100.41" y="1052.0" font-size="25.00" font-weight="normal" fill="#f4f4f4" textLength="44.30" lengthAdjust="spacingAndGlyphs" >0,31</text>
<text x="2198.11" y="1052.0" font-size="25.00" font-weight="normal" fill="#f4f4f4" textLength="44.30" lengthAdjust="spacingAndGlyphs" >0,31</text>
<rect x="967.5" y="1062.1" width="1349.0" height="39.4" fill="#808080" />
<text x="985.02" y="1091.1" font-size="25.00" font-weight="bold" fill="#f4f4f4" textLength="91.02" lengthAdjust="spacingAndGlyphs" >y: CIE31</text>
<text x="1203.27" y="1091.1" font-size="25.00" font-weight="normal" fill="#f4f4f4" textLength="46.43" lengthAdjust="spacingAndGlyphs" >0,22</text>
<text x="1315.07" y="1091.1" font-size="25.00" font-weight="normal" fill="#f4f4f4" textLength="46.43" lengthAdjust="spacingAndGlyphs" >0,32</text>
<text x="1413.07" y="1091.1" font-size="25.00" font-weight="normal" fill="#f4f4f4" textLength="46.43" lengthAdjust="spacingAndGlyphs" >0,32</text>
<text x="1511.47" y="1091.1" font-size="25.00" font-weight="normal" fill="#f4f4f4" textLength="46.27" lengthAdjust="spacingAndGlyphs" >0,33</text>
<text x="1609.37" y="1091.1" font-size="25.00" font-weight="normal" fill="#f4f4f4" textLength="46.27" lengthAdjust="spacingAndGlyphs" >0,33</text>
<text x="1707.27" y="1091.1" font-size="25.00" font-weight="normal" fill="#f4f4f4" textLength="46.27" lengthAdjust="spacingAndGlyphs" >0,33</text>
<text x="1805.67" y="1091.1" font-size="25.00" font-weight="normal" fill="#f4f4f4" textLength="46.27" lengthAdjust="spacingAndGlyphs" >0,33</text>
<text x="1904.07" y="1091.1" font-size="25.00" font-weight="normal" fill="#f4f4f4" textLength="46.27" lengthAdjust="spacingAndGlyphs" >0,33</text>
<text x="2001.87" y="1091.1" font-size="25.00" font-weight="normal" fill="#f4f4f4" textLength="46.27" lengthAdjust="spacingAndGlyphs" >0,33</text>
<text x="2100.37" y="1091.1" font-size="25.00" font-weight="normal" fill="#f4f4f4" textLength="46.27" lengthAdjust="spacingAndGlyphs" >0,33</text>
<text x="2198.07" y="1091.1" font-size="25.00" font-weight="normal" fill="#f4f4f4" textLength="46.27" lengthAdjust="spacingAndGlyphs" >0,33</text>
<rect x="967.5" y="1101.2" width="1349.0" height="39.4" fill="#434343" />
<text x="984.81" y="1130.2" font-size="25.00" font-weight="bold" fill="#f4f4f4" textLength="15.15" lengthAdjust="spacingAndGlyphs" >Y</text>
<text x="1203.27" y="1130.2" font-size="25.00" font-weight="normal" fill="#f4f4f4" textLength="46.43" lengthAdjust="spacingAndGlyphs" >0,22</text>
<text x="1314.80" y="1130.2" font-size="25.00" font-weight="normal" fill="#f4f4f4" textLength="46.55" lengthAdjust="spacingAndGlyphs" >2,93</text>
<text x="1412.88" y="1130.2" font-size="25.00" font-weight="normal" fill="#f4f4f4" textLength="46.63" lengthAdjust="spacingAndGlyphs" >9,62</text>
<text x="1511.19" y="1130.2" font-size="25.00" font-weight="normal" fill="#f4f4f4" textLength="60.12" lengthAdjust="spacingAndGlyphs" >21,52</text>
<text x="1609.76" y="1130.2" font-size="25.00" font-weight="normal" fill="#f4f4f4" textLength="59.24" lengthAdjust="spacingAndGlyphs" >40,15</text>
<text x="1706.98" y="1130.2" font-size="25.00" font-weight="normal" fill="#f4f4f4" textLength="60.13" lengthAdjust="spacingAndGlyphs" >64,72</text>
<text x="1805.48" y="1130.2" font-size="25.00" font-weight="normal" fill="#f4f4f4" textLength="59.87" lengthAdjust="spacingAndGlyphs" >95,56</text>
<text x="1905.00" y="1130.2" font-size="25.00" font-weight="normal" fill="#f4f4f4" textLength="72.29" lengthAdjust="spacingAndGlyphs" >133,47</text>
<text x="2002.80" y="1130.2" font-size="25.00" font-weight="normal" fill="#f4f4f4" textLength="72.29" lengthAdjust="spacingAndGlyphs" >181,37</text>
<text x="2100.09" y="1130.2" font-size="25.00" font-weight="normal" fill="#f4f4f4" textLength="73.36" lengthAdjust="spacingAndGlyphs" >237,73</text>
<text x="2198.09" y="1130.2" font-size="25.00" font-weight="normal" fill="#f4f4f4" textLength="73.06" lengthAdjust="spacingAndGlyphs" >300,13</text>
<rect x="967.5" y="1140.3" width="1349.0" height="39.4" fill="#808080" />
<text x="984.93" y="1169.3" font-size="25.00" font-weight="bold" fill="#f4f4f4" textLength="95.75" lengthAdjust="spacingAndGlyphs" >Target Y</text>
<text x="1203.27" y="1169.3" font-size="25.00" font-weight="normal" fill="#f4f4f4" textLength="46.15" lengthAdjust="spacingAndGlyphs" >0,00</text>
<text x="1315.10" y="1169.3" font-size="25.00" font-weight="normal" fill="#f4f4f4" textLength="46.13" lengthAdjust="spacingAndGlyphs" >3,10</text>
<text x="1412.89" y="1169.3" font-size="25.00" font-weight="normal" fill="#f4f4f4" textLength="46.10" lengthAdjust="spacingAndGlyphs" >9,94</text>
<text x="1511.19" y="1169.3" font-size="25.00" font-weight="normal" fill="#f4f4f4" textLength="60.04" lengthAdjust="spacingAndGlyphs" >21,69</text>
<text x="1609.39" y="1169.3" font-size="25.00" font-weight="normal" fill="#f4f4f4" textLength="59.64" lengthAdjust="spacingAndGlyphs" >39,88</text>
<text x="1706.98" y="1169.3" font-size="25.00" font-weight="normal" fill="#f4f4f4" textLength="60.06" lengthAdjust="spacingAndGlyphs" >64,79</text>
<text x="1805.52" y="1169.3" font-size="25.00" font-weight="normal" fill="#f4f4f4" textLength="57.91" lengthAdjust="spacingAndGlyphs" >95,61</text>
<text x="1905.00" y="1169.3" font-size="25.00" font-weight="normal" fill="#f4f4f4" textLength="72.29" lengthAdjust="spacingAndGlyphs" >133,62</text>
<text x="2002.80" y="1169.3" font-size="25.00" font-weight="normal" fill="#f4f4f4" textLength="72.13" lengthAdjust="spacingAndGlyphs" >181,23</text>
<text x="2100.09" y="1169.3" font-size="25.00" font-weight="normal" fill="#f4f4f4" textLength="73.44" lengthAdjust="spacingAndGlyphs" >237,49</text>
<text x="2198.09" y="1169.3" font-size="25.00" font-weight="normal" fill="#f4f4f4" textLength="73.06" lengthAdjust="spacingAndGlyphs" >300,13</text>
<rect x="967.5" y="1179.5" width="1349.0" height="39.4" fill="#434343" />
<text x="984.18" y="1208.5" font-size="25.00" font-weight="bold" fill="#f4f4f4" textLength="196.28" lengthAdjust="spacingAndGlyphs" >Gamma Log/Log</text>
<text x="1204.23" y="1208.5" font-size="25.00" font-weight="normal" fill="#f4f4f4" textLength="45.28" lengthAdjust="spacingAndGlyphs" >1,28</text>
<text x="1314.80" y="1208.5" font-size="25.00" font-weight="normal" fill="#f4f4f4" textLength="46.55" lengthAdjust="spacingAndGlyphs" >2,03</text>
<text x="1412.81" y="1208.5" font-size="25.00" font-weight="normal" fill="#f4f4f4" textLength="46.19" lengthAdjust="spacingAndGlyphs" >2,14</text>
<text x="1511.20" y="1208.5" font-size="25.00" font-weight="normal" fill="#f4f4f4" textLength="46.54" lengthAdjust="spacingAndGlyphs" >2,18</text>
<text x="1609.10" y="1208.5" font-size="25.00" font-weight="normal" fill="#f4f4f4" textLength="46.43" lengthAdjust="spacingAndGlyphs" >2,20</text>
<text x="1707.00" y="1208.5" font-size="25.00" font-weight="normal" fill="#f4f4f4" textLength="46.55" lengthAdjust="spacingAndGlyphs" >2,23</text>
<text x="1805.41" y="1208.5" font-size="25.00" font-weight="normal" fill="#f4f4f4" textLength="46.19" lengthAdjust="spacingAndGlyphs" >2,24</text>
<text x="1903.80" y="1208.5" font-size="25.00" font-weight="normal" fill="#f4f4f4" textLength="46.51" lengthAdjust="spacingAndGlyphs" >2,25</text>
<text x="2001.60" y="1208.5" font-size="25.00" font-weight="normal" fill="#f4f4f4" textLength="46.55" lengthAdjust="spacingAndGlyphs" >2,26</text>
<text x="2100.10" y="1208.5" font-size="25.00" font-weight="normal" fill="#f4f4f4" textLength="46.55" lengthAdjust="spacingAndGlyphs" >2,26</text>
<text x="2197.79" y="1208.5" font-size="25.00" font-weight="normal" fill="#f4f4f4" textLength="46.71" lengthAdjust="spacingAndGlyphs" >2,27</text>
<rect x="967.5" y="1218.6" width="1349.0" height="39.4" fill="#808080" />
<text x="984.29" y="1247.6" font-size="25.00" font-weight="bold" fill="#f4f4f4" textLength="45.65" lengthAdjust="spacingAndGlyphs" >CCT</text>
<text x="1203.65" y="1247.6" font-size="25.00" font-weight="normal" fill="#f4f4f4" textLength="99.38" lengthAdjust="spacingAndGlyphs" >41411,00</text>
<text x="1314.78" y="1247.6" font-size="25.00" font-weight="normal" fill="#f4f4f4" textLength="86.65" lengthAdjust="spacingAndGlyphs" >6857,00</text>
<text x="1412.78" y="1247.6" font-size="25.00" font-weight="normal" fill="#f4f4f4" textLength="86.65" lengthAdjust="spacingAndGlyphs" >6673,00</text>
<text x="1511.18" y="1247.6" font-size="25.00" font-weight="normal" fill="#f4f4f4" textLength="86.65" lengthAdjust="spacingAndGlyphs" >6589,00</text>
<text x="1609.08" y="1247.6" font-size="25.00" font-weight="normal" fill="#f4f4f4" textLength="86.65" lengthAdjust="spacingAndGlyphs" >6605,00</text>
<text x="1706.98" y="1247.6" font-size="25.00" font-weight="normal" fill="#f4f4f4" textLength="86.65" lengthAdjust="spacingAndGlyphs" >6624,00</text>
<text x="1805.38" y="1247.6" font-size="25.00" font-weight="normal" fill="#f4f4f4" textLength="86.65" lengthAdjust="spacingAndGlyphs" >6605,00</text>
<text x="1903.78" y="1247.6" font-size="25.00" font-weight="normal" fill="#f4f4f4" textLength="86.65" lengthAdjust="spacingAndGlyphs" >6592,00</text>
<text x="2001.58" y="1247.6" font-size="25.00" font-weight="normal" fill="#f4f4f4" textLength="86.65" lengthAdjust="spacingAndGlyphs" >6599,00</text>
<text x="2100.08" y="1247.6" font-size="25.00" font-weight="normal" fill="#f4f4f4" textLength="86.65" lengthAdjust="spacingAndGlyphs" >6612,00</text>
<text x="2197.78" y="1247.6" font-size="25.00" font-weight="normal" fill="#f4f4f4" textLength="86.65" lengthAdjust="spacingAndGlyphs" >6595,00</text>
<rect x="967.5" y="1257.7" width="1349.0" height="39.4" fill="#434343" />
<text x="984.20" y="1286.7" font-size="25.00" font-weight="bold" fill="#f4f4f4" textLength="95.81" lengthAdjust="spacingAndGlyphs" >ΔE 2000</text>
<text x="1204.23" y="1286.7" font-size="25.00" font-weight="normal" fill="#f4f4f4" textLength="45.30" lengthAdjust="spacingAndGlyphs" >1,56</text>
<text x="1316.03" y="1286.7" font-size="25.00" font-weight="normal" fill="#f4f4f4" textLength="45.25" lengthAdjust="spacingAndGlyphs" >1,05</text>
<text x="1413.07" y="1286.7" font-size="25.00" font-weight="normal" fill="#f4f4f4" textLength="46.26" lengthAdjust="spacingAndGlyphs" >0,98</text>
<text x="1511.48" y="1286.7" font-size="25.00" font-weight="normal" fill="#f4f4f4" textLength="45.91" lengthAdjust="spacingAndGlyphs" >0,34</text>
<text x="1609.37" y="1286.7" font-size="25.00" font-weight="normal" fill="#f4f4f4" textLength="46.27" lengthAdjust="spacingAndGlyphs" >0,63</text>
<text x="1707.27" y="1286.7" font-size="25.00" font-weight="normal" fill="#f4f4f4" textLength="46.26" lengthAdjust="spacingAndGlyphs" >0,88</text>
<text x="1805.67" y="1286.7" font-size="25.00" font-weight="normal" fill="#f4f4f4" textLength="46.27" lengthAdjust="spacingAndGlyphs" >0,83</text>
<text x="1904.07" y="1286.7" font-size="25.00" font-weight="normal" fill="#f4f4f4" textLength="46.27" lengthAdjust="spacingAndGlyphs" >0,73</text>
<text x="2001.91" y="1286.7" font-size="25.00" font-weight="normal" fill="#f4f4f4" textLength="44.30" lengthAdjust="spacingAndGlyphs" >0,81</text>
<text x="2101.33" y="1286.7" font-size="25.00" font-weight="normal" fill="#f4f4f4" textLength="45.28" lengthAdjust="spacingAndGlyphs" >1,18</text>
<text x="2199.03" y="1286.7" font-size="25.00" font-weight="normal" fill="#f4f4f4" textLength="45.30" lengthAdjust="spacingAndGlyphs" >1,16</text>
<defs><linearGradient id="bbar" x1="0" x2="0" y1="0" y2="1"><stop offset="0" stop-color="#4a4a4a"/><stop offset="1" stop-color="#1e1e1e"/></linearGradient><linearGradient id="bbtn" x1="0" x2="0" y1="0" y2="1"><stop offset="0" stop-color="#b0b0b0"/><stop offset="0.1" stop-color="#9c9c9c"/><stop offset="0.55" stop-color="#8a8a8a"/><stop offset="1" stop-color="#5c5c5c"/></linearGradient><linearGradient id="bsel" x1="0" x2="0" y1="0" y2="1"><stop offset="0" stop-color="#1a1a1a"/><stop offset="1" stop-color="#303030"/></linearGradient><linearGradient id="cbtn" x1="0" x2="0" y1="0" y2="1"><stop offset="0" stop-color="#a8a8a8"/><stop offset="1" stop-color="#6a6a6a"/></linearGradient><radialGradient id="ck" cx="0.5" cy="0.35" r="0.65"><stop offset="0" stop-color="#7c7c7c"/><stop offset="0.8" stop-color="#8e8e8e"/><stop offset="1" stop-color="#a4a4a4"/></radialGradient></defs>
<rect x="0.0" y="1329.5" width="2560.0" height="62.5" fill="#2c2c2c" />
<rect x="1671.0" y="1329.5" width="566.0" height="62.5" fill="url(#bbar)" />
<rect x="1.25" y="1330" width="149.5" height="60.8" rx="3.5" fill="url(#bbtn)"/>
<rect x="6.0" y="1335" width="140" height="36" rx="4" fill="#000000"/>
<text x="76.0" y="1387.2" font-size="10.47" text-anchor="middle" font-weight="bold" fill="#333333" >0</text>
<rect x="153.25" y="1330" width="149.5" height="60.8" rx="3.5" fill="url(#bbtn)"/>
<rect x="158.0" y="1335" width="140" height="36" rx="4" fill="#1a1a1a"/>
<text x="228.0" y="1387.2" font-size="10.47" text-anchor="middle" font-weight="bold" fill="#333333" >10</text>
<rect x="305.25" y="1330" width="149.5" height="60.8" rx="3.5" fill="url(#bbtn)"/>
<rect x="310.0" y="1335" width="140" height="36" rx="4" fill="#333333"/>
<text x="380.0" y="1387.2" font-size="10.47" text-anchor="middle" font-weight="bold" fill="#333333" >20</text>
<rect x="457.25" y="1330" width="149.5" height="60.8" rx="3.5" fill="url(#bbtn)"/>
<rect x="462.0" y="1335" width="140" height="36" rx="4" fill="#4c4c4c"/>
<text x="532.0" y="1387.2" font-size="10.47" text-anchor="middle" font-weight="bold" fill="#333333" >30</text>
<rect x="609.25" y="1330" width="149.5" height="60.8" rx="3.5" fill="url(#bbtn)"/>
<rect x="614.0" y="1335" width="140" height="36" rx="4" fill="#666666"/>
<text x="684.0" y="1387.2" font-size="10.47" text-anchor="middle" font-weight="bold" fill="#333333" >40</text>
<rect x="761.25" y="1330" width="149.5" height="60.8" rx="3.5" fill="url(#bbtn)"/>
<rect x="766.0" y="1335" width="140" height="36" rx="4" fill="#808080"/>
<text x="836.0" y="1387.2" font-size="10.47" text-anchor="middle" font-weight="bold" fill="#333333" >50</text>
<rect x="913.25" y="1330" width="149.5" height="60.8" rx="3.5" fill="url(#bbtn)"/>
<rect x="918.0" y="1335" width="140" height="36" rx="4" fill="#999999"/>
<text x="988.0" y="1387.2" font-size="10.47" text-anchor="middle" font-weight="bold" fill="#333333" >60</text>
<rect x="1065.25" y="1330" width="149.5" height="60.8" rx="3.5" fill="url(#bbtn)"/>
<rect x="1070.0" y="1335" width="140" height="36" rx="4" fill="#b2b2b2"/>
<text x="1140.0" y="1387.2" font-size="10.47" text-anchor="middle" font-weight="bold" fill="#333333" >70</text>
<rect x="1217.25" y="1330" width="149.5" height="60.8" rx="3.5" fill="url(#bbtn)"/>
<rect x="1222.0" y="1335" width="140" height="36" rx="4" fill="#cccccc"/>
<text x="1292.0" y="1387.2" font-size="10.47" text-anchor="middle" font-weight="bold" fill="#333333" >80</text>
<rect x="1369.25" y="1330" width="149.5" height="60.8" rx="3.5" fill="url(#bbtn)"/>
<rect x="1374.0" y="1335" width="140" height="36" rx="4" fill="#e6e6e6"/>
<text x="1444.0" y="1387.2" font-size="10.47" text-anchor="middle" font-weight="bold" fill="#333333" >90</text>
<rect x="1521.0" y="1330" width="150" height="60.8" rx="3.5" fill="url(#bsel)"/>
<rect x="1526.0" y="1334.8" width="140" height="36.2" rx="4.5" fill="#ffffff"/>
<text x="1596.0" y="1387.2" font-size="10.47" text-anchor="middle" font-weight="bold" fill="#ffffff" >100</text>
<defs><linearGradient id="dz" x1="0" x2="0" y1="0" y2="1"><stop offset="0" stop-color="#444"/><stop offset="1" stop-color="#222"/></linearGradient></defs>
<rect x="2237.0" y="1330.0" width="320.0" height="62.0" fill="url(#dz)" />
<rect x="2237" y="1330" width="48" height="62" rx="3" fill="url(#cbtn)"/>
<line x1="2237.0" y1="1348.5" x2="2285.0" y2="1348.5" stroke="#555" stroke-width="1.2" />
<circle cx="2261" cy="1339.5" r="7" fill="url(#ck)"/>
<path d="M2256 1342.5 L2266 1342.5 L2261 1337 Z" fill="#2a2a2a"/>
<rect x="2246.5" y="1355.5" width="29" height="29" rx="3" fill="#b0b0b0" stroke="#1a1a1a" stroke-width="2.4"/>
<rect x="2254.0" y="1363.0" width="14.0" height="14.0" fill="#000" />
<rect x="2286" y="1330" width="46" height="29.5" fill="url(#cbtn)"/>
<circle cx="2309.5" cy="1345" r="9.8" fill="url(#ck)"/>
<rect x="2333" y="1330" width="43.5" height="29.5" fill="url(#cbtn)"/>
<circle cx="2355.25" cy="1345" r="9.8" fill="url(#ck)"/>
<rect x="2378" y="1330" width="43.5" height="29.5" fill="url(#cbtn)"/>
<circle cx="2400.25" cy="1345" r="9.8" fill="url(#ck)"/>
<rect x="2423" y="1330" width="44" height="29.5" fill="url(#cbtn)"/>
<circle cx="2445.5" cy="1345" r="9.8" fill="url(#ck)"/>
<rect x="2468" y="1330" width="44" height="29.5" fill="url(#cbtn)"/>
<circle cx="2490.5" cy="1345" r="9.8" fill="url(#ck)"/>
<rect x="2303.5" y="1340.5" width="8.5" height="8.5" fill="#2a2a2a" />
<path d="M2352 1339.5 L2360 1345.5 L2352 1351.5 Z" fill="#2a2a2a"/>
<text x="2400.0" y="1350.0" font-size="13.08" text-anchor="middle" font-weight="bold" fill="#2a2a2a" textLength="15.0" lengthAdjust="spacingAndGlyphs" >[··]</text>
<path d="M2441 1344.5 a3.2 3 0 1 0 0.01 0 M2441 1344.5 m0 0" fill="none"/>
<g fill="none" stroke="#2a2a2a" stroke-width="1.8"><ellipse cx="2441.5" cy="1344.5" rx="3.6" ry="2.8"/><ellipse cx="2448.6" cy="1344.5" rx="3.6" ry="2.8"/></g>
<g fill="none" stroke="#2a2a2a" stroke-width="2.2"><path d="M2484.77 1346.47 A4.9 4.9 0 0 1 2492.31 1341.19"/><path d="M2494.23 1343.93 A4.9 4.9 0 0 1 2486.69 1349.21"/></g>
<path d="M2495.26 1343.25 L2493.92 1338.89 L2490.70 1343.48 Z M2483.74 1347.15 L2485.08 1351.51 L2488.30 1346.92 Z" fill="#2a2a2a"/>
<circle cx="2536" cy="1345" r="9.5" fill="#2c2c2c"/>
<rect x="2286.5" y="1361" width="135" height="31" rx="3" fill="url(#cbtn)"/>
<rect x="2423" y="1361" width="135" height="31" rx="3" fill="url(#cbtn)"/>
<circle cx="2316.5" cy="1376.5" r="9" fill="url(#ck)"/>
<circle cx="2530.3" cy="1376.5" r="9" fill="url(#ck)"/>
<text x="2316.5" y="1382.0" font-size="17.44" text-anchor="middle" font-weight="bold" fill="#2a2a2a" >«</text>
<text x="2530.3" y="1382.0" font-size="17.44" text-anchor="middle" font-weight="bold" fill="#2a2a2a" >»</text>
<text x="2342.10" y="1383.8" font-size="22.53" font-weight="normal" fill="#2a2a2a" textLength="51.57" lengthAdjust="spacingAndGlyphs" stroke="#2a2a2a" stroke-width="0.6">Back</text>
<text x="2448.25" y="1383.8" font-size="22.53" font-weight="normal" fill="#2a2a2a" textLength="53.94" lengthAdjust="spacingAndGlyphs" stroke="#2a2a2a" stroke-width="0.6">Next</text>
<rect x="2552.0" y="1329.5" width="8.0" height="62.5" fill="url(#redge)" opacity="0.8"/>
</svg></body></html>
